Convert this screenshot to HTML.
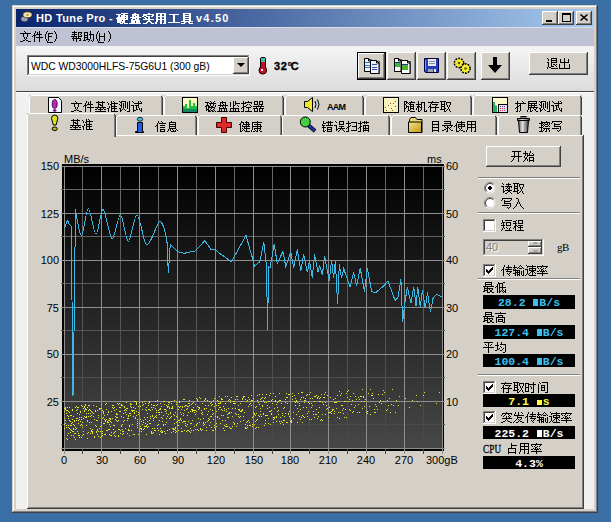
<!DOCTYPE html><html><head><meta charset="utf-8"><style>html,body{margin:0;padding:0}body{width:611px;height:522px;position:relative;overflow:hidden;background:#3A6EA5}div{box-sizing:border-box}</style></head><body>
<div style="position:absolute;left:12px;top:5px;width:586px;height:508px;background:#404040"></div>
<div style="position:absolute;left:12px;top:5px;width:585px;height:507px;background:#D4D0C8"></div>
<div style="position:absolute;left:13px;top:6px;width:584px;height:506px;background:#808080"></div>
<div style="position:absolute;left:13px;top:6px;width:583px;height:505px;background:#fff"></div>
<div style="position:absolute;left:14px;top:7px;width:582px;height:504px;background:#D4D0C8"></div>
<div style="position:absolute;left:16px;top:27px;width:578px;height:482px;background:#F0F0F0"></div>
<div style="position:absolute;left:16px;top:9px;width:578px;height:18px;background:linear-gradient(to right,#0A246A,#A6CAF0)"></div>
<div style="position:absolute;left:36px;top:13px;font-family:'Liberation Sans', sans-serif;font-size:11px;line-height:11px;color:#fff;font-weight:bold;white-space:nowrap;letter-spacing:0.35px">HD Tune Pro -</div>
<div style="position:absolute;left:196px;top:13px;font-family:'Liberation Sans', sans-serif;font-size:11px;line-height:11px;color:#fff;font-weight:bold;white-space:nowrap;letter-spacing:1.2px">v4.50</div>
<div style="position:absolute;left:542px;top:11px;width:16px;height:14px;background:#404040"></div><div style="position:absolute;left:542px;top:11px;width:15px;height:13px;background:#fff"></div><div style="position:absolute;left:543px;top:12px;width:14px;height:12px;background:#808080"></div><div style="position:absolute;left:543px;top:12px;width:13px;height:11px;background:#D4D0C8"></div>
<div style="position:absolute;left:558px;top:11px;width:16px;height:14px;background:#404040"></div><div style="position:absolute;left:558px;top:11px;width:15px;height:13px;background:#fff"></div><div style="position:absolute;left:559px;top:12px;width:14px;height:12px;background:#808080"></div><div style="position:absolute;left:559px;top:12px;width:13px;height:11px;background:#D4D0C8"></div>
<div style="position:absolute;left:576px;top:11px;width:16px;height:14px;background:#404040"></div><div style="position:absolute;left:576px;top:11px;width:15px;height:13px;background:#fff"></div><div style="position:absolute;left:577px;top:12px;width:14px;height:12px;background:#808080"></div><div style="position:absolute;left:577px;top:12px;width:13px;height:11px;background:#D4D0C8"></div>
<div style="position:absolute;left:546px;top:20px;width:6px;height:2px;background:#000"></div>
<div style="position:absolute;left:562px;top:13px;width:9px;height:9px;border:1px solid #000;border-top-width:2px"></div>
<div style="position:absolute;left:16px;top:27px;width:578px;height:19px;background:#BEC2D2"></div>
<div style="position:absolute;left:16px;top:27px;width:578px;height:1px;background:#D8DEEC"></div>
<div style="position:absolute;left:16px;top:46px;width:578px;height:45px;background:linear-gradient(to bottom,#F4F4F4,#DCDCDC)"></div>
<div style="position:absolute;left:16px;top:91px;width:578px;height:1px;background:#404040"></div>
<div style="position:absolute;left:16px;top:92px;width:578px;height:1px;background:#fff"></div>
<div style="position:absolute;left:27px;top:55px;width:223px;height:21px;background:#fff"></div><div style="position:absolute;left:27px;top:55px;width:222px;height:20px;background:#808080"></div><div style="position:absolute;left:28px;top:56px;width:221px;height:19px;background:#D4D0C8"></div><div style="position:absolute;left:28px;top:56px;width:220px;height:18px;background:#404040"></div><div style="position:absolute;left:29px;top:57px;width:219px;height:17px;background:#fff"></div>
<div style="position:absolute;left:31px;top:61px;font-family:'Liberation Sans', sans-serif;font-size:11px;line-height:11px;color:#000;font-weight:normal;white-space:nowrap;transform:scaleX(0.94);transform-origin:0 0">WDC WD3000HLFS-75G6U1 (300 gB)</div>
<div style="position:absolute;left:233px;top:57px;width:16px;height:17px;background:#404040"></div><div style="position:absolute;left:233px;top:57px;width:15px;height:16px;background:#fff"></div><div style="position:absolute;left:234px;top:58px;width:14px;height:15px;background:#808080"></div><div style="position:absolute;left:234px;top:58px;width:13px;height:14px;background:#D4D0C8"></div>
<div style="position:absolute;left:237px;top:63px;width:0;height:0;border-left:4px solid transparent;border-right:4px solid transparent;border-top:4px solid #000"></div>
<div style="position:absolute;left:274px;top:61px;font-family:'Liberation Sans', sans-serif;font-size:11px;line-height:11px;color:#000;font-weight:bold;white-space:nowrap;letter-spacing:0.6px;-webkit-text-stroke:0.3px #000">32<span style="letter-spacing:-1.2px">&#176;</span>C</div>
<div style="position:absolute;left:357px;top:52px;width:29px;height:28px;background:#000"></div><div style="position:absolute;left:358px;top:53px;width:27px;height:26px;background:#404040"></div><div style="position:absolute;left:358px;top:53px;width:26px;height:25px;background:#fff"></div><div style="position:absolute;left:359px;top:54px;width:25px;height:24px;background:#808080"></div><div style="position:absolute;left:359px;top:54px;width:24px;height:23px;background:#D4D0C8"></div>
<div style="position:absolute;left:387px;top:52px;width:29px;height:28px;background:#404040"></div><div style="position:absolute;left:387px;top:52px;width:28px;height:27px;background:#fff"></div><div style="position:absolute;left:388px;top:53px;width:27px;height:26px;background:#808080"></div><div style="position:absolute;left:388px;top:53px;width:26px;height:25px;background:#D4D0C8"></div>
<div style="position:absolute;left:417px;top:52px;width:29px;height:28px;background:#404040"></div><div style="position:absolute;left:417px;top:52px;width:28px;height:27px;background:#fff"></div><div style="position:absolute;left:418px;top:53px;width:27px;height:26px;background:#808080"></div><div style="position:absolute;left:418px;top:53px;width:26px;height:25px;background:#D4D0C8"></div>
<div style="position:absolute;left:447px;top:52px;width:29px;height:28px;background:#404040"></div><div style="position:absolute;left:447px;top:52px;width:28px;height:27px;background:#fff"></div><div style="position:absolute;left:448px;top:53px;width:27px;height:26px;background:#808080"></div><div style="position:absolute;left:448px;top:53px;width:26px;height:25px;background:#D4D0C8"></div>
<div style="position:absolute;left:481px;top:52px;width:29px;height:28px;background:#404040"></div><div style="position:absolute;left:481px;top:52px;width:28px;height:27px;background:#fff"></div><div style="position:absolute;left:482px;top:53px;width:27px;height:26px;background:#808080"></div><div style="position:absolute;left:482px;top:53px;width:26px;height:25px;background:#D4D0C8"></div>
<div style="position:absolute;left:529px;top:52px;width:59px;height:23px;background:#404040"></div><div style="position:absolute;left:529px;top:52px;width:58px;height:22px;background:#fff"></div><div style="position:absolute;left:530px;top:53px;width:57px;height:21px;background:#808080"></div><div style="position:absolute;left:530px;top:53px;width:56px;height:20px;background:#D4D0C8"></div>
<div style="position:absolute;left:29px;top:95px;width:134px;height:20px;background:#D4D0C8"></div><div style="position:absolute;left:29px;top:97px;width:1px;height:18px;background:#fff"></div><div style="position:absolute;left:30px;top:96px;width:1px;height:1px;background:#fff"></div><div style="position:absolute;left:31px;top:95px;width:130px;height:1px;background:#fff"></div><div style="position:absolute;left:161px;top:97px;width:1px;height:18px;background:#808080"></div><div style="position:absolute;left:162px;top:97px;width:1px;height:18px;background:#404040"></div><div style="position:absolute;left:161px;top:96px;width:1px;height:1px;background:#404040"></div>
<div style="position:absolute;left:164px;top:95px;width:120px;height:20px;background:#D4D0C8"></div><div style="position:absolute;left:164px;top:97px;width:1px;height:18px;background:#fff"></div><div style="position:absolute;left:165px;top:96px;width:1px;height:1px;background:#fff"></div><div style="position:absolute;left:166px;top:95px;width:116px;height:1px;background:#fff"></div><div style="position:absolute;left:282px;top:97px;width:1px;height:18px;background:#808080"></div><div style="position:absolute;left:283px;top:97px;width:1px;height:18px;background:#404040"></div><div style="position:absolute;left:282px;top:96px;width:1px;height:1px;background:#404040"></div>
<div style="position:absolute;left:285px;top:95px;width:79px;height:20px;background:#D4D0C8"></div><div style="position:absolute;left:285px;top:97px;width:1px;height:18px;background:#fff"></div><div style="position:absolute;left:286px;top:96px;width:1px;height:1px;background:#fff"></div><div style="position:absolute;left:287px;top:95px;width:75px;height:1px;background:#fff"></div><div style="position:absolute;left:362px;top:97px;width:1px;height:18px;background:#808080"></div><div style="position:absolute;left:363px;top:97px;width:1px;height:18px;background:#404040"></div><div style="position:absolute;left:362px;top:96px;width:1px;height:1px;background:#404040"></div>
<div style="position:absolute;left:365px;top:95px;width:107px;height:20px;background:#D4D0C8"></div><div style="position:absolute;left:365px;top:97px;width:1px;height:18px;background:#fff"></div><div style="position:absolute;left:366px;top:96px;width:1px;height:1px;background:#fff"></div><div style="position:absolute;left:367px;top:95px;width:103px;height:1px;background:#fff"></div><div style="position:absolute;left:470px;top:97px;width:1px;height:18px;background:#808080"></div><div style="position:absolute;left:471px;top:97px;width:1px;height:18px;background:#404040"></div><div style="position:absolute;left:470px;top:96px;width:1px;height:1px;background:#404040"></div>
<div style="position:absolute;left:473px;top:95px;width:109px;height:20px;background:#D4D0C8"></div><div style="position:absolute;left:473px;top:97px;width:1px;height:18px;background:#fff"></div><div style="position:absolute;left:474px;top:96px;width:1px;height:1px;background:#fff"></div><div style="position:absolute;left:475px;top:95px;width:105px;height:1px;background:#fff"></div><div style="position:absolute;left:580px;top:97px;width:1px;height:18px;background:#808080"></div><div style="position:absolute;left:581px;top:97px;width:1px;height:18px;background:#404040"></div><div style="position:absolute;left:580px;top:96px;width:1px;height:1px;background:#404040"></div>
<div style="position:absolute;left:27px;top:135px;width:557px;height:374px;background:#404040"></div>
<div style="position:absolute;left:27px;top:135px;width:556px;height:373px;background:#fff"></div>
<div style="position:absolute;left:28px;top:136px;width:555px;height:372px;background:#808080"></div>
<div style="position:absolute;left:28px;top:136px;width:554px;height:371px;background:#D4D0C8"></div>
<div style="position:absolute;left:116px;top:115px;width:81px;height:20px;background:#D4D0C8"></div><div style="position:absolute;left:116px;top:117px;width:1px;height:18px;background:#fff"></div><div style="position:absolute;left:117px;top:116px;width:1px;height:1px;background:#fff"></div><div style="position:absolute;left:118px;top:115px;width:77px;height:1px;background:#fff"></div><div style="position:absolute;left:195px;top:117px;width:1px;height:18px;background:#808080"></div><div style="position:absolute;left:196px;top:117px;width:1px;height:18px;background:#404040"></div><div style="position:absolute;left:195px;top:116px;width:1px;height:1px;background:#404040"></div>
<div style="position:absolute;left:198px;top:115px;width:84px;height:20px;background:#D4D0C8"></div><div style="position:absolute;left:198px;top:117px;width:1px;height:18px;background:#fff"></div><div style="position:absolute;left:199px;top:116px;width:1px;height:1px;background:#fff"></div><div style="position:absolute;left:200px;top:115px;width:80px;height:1px;background:#fff"></div><div style="position:absolute;left:280px;top:117px;width:1px;height:18px;background:#808080"></div><div style="position:absolute;left:281px;top:117px;width:1px;height:18px;background:#404040"></div><div style="position:absolute;left:280px;top:116px;width:1px;height:1px;background:#404040"></div>
<div style="position:absolute;left:282px;top:115px;width:108px;height:20px;background:#D4D0C8"></div><div style="position:absolute;left:282px;top:117px;width:1px;height:18px;background:#fff"></div><div style="position:absolute;left:283px;top:116px;width:1px;height:1px;background:#fff"></div><div style="position:absolute;left:284px;top:115px;width:104px;height:1px;background:#fff"></div><div style="position:absolute;left:388px;top:117px;width:1px;height:18px;background:#808080"></div><div style="position:absolute;left:389px;top:117px;width:1px;height:18px;background:#404040"></div><div style="position:absolute;left:388px;top:116px;width:1px;height:1px;background:#404040"></div>
<div style="position:absolute;left:391px;top:115px;width:106px;height:20px;background:#D4D0C8"></div><div style="position:absolute;left:391px;top:117px;width:1px;height:18px;background:#fff"></div><div style="position:absolute;left:392px;top:116px;width:1px;height:1px;background:#fff"></div><div style="position:absolute;left:393px;top:115px;width:102px;height:1px;background:#fff"></div><div style="position:absolute;left:495px;top:117px;width:1px;height:18px;background:#808080"></div><div style="position:absolute;left:496px;top:117px;width:1px;height:18px;background:#404040"></div><div style="position:absolute;left:495px;top:116px;width:1px;height:1px;background:#404040"></div>
<div style="position:absolute;left:498px;top:115px;width:84px;height:20px;background:#D4D0C8"></div><div style="position:absolute;left:498px;top:117px;width:1px;height:18px;background:#fff"></div><div style="position:absolute;left:499px;top:116px;width:1px;height:1px;background:#fff"></div><div style="position:absolute;left:500px;top:115px;width:80px;height:1px;background:#fff"></div><div style="position:absolute;left:580px;top:117px;width:1px;height:18px;background:#808080"></div><div style="position:absolute;left:581px;top:117px;width:1px;height:18px;background:#404040"></div><div style="position:absolute;left:580px;top:116px;width:1px;height:1px;background:#404040"></div>
<div style="position:absolute;left:27px;top:113px;width:89px;height:24px;background:#D4D0C8"></div><div style="position:absolute;left:27px;top:115px;width:1px;height:22px;background:#fff"></div><div style="position:absolute;left:28px;top:114px;width:1px;height:1px;background:#fff"></div><div style="position:absolute;left:29px;top:113px;width:85px;height:1px;background:#fff"></div><div style="position:absolute;left:114px;top:115px;width:1px;height:22px;background:#808080"></div><div style="position:absolute;left:115px;top:115px;width:1px;height:22px;background:#404040"></div><div style="position:absolute;left:114px;top:114px;width:1px;height:1px;background:#404040"></div>
<div style="position:absolute;left:28px;top:135px;width:86px;height:2px;background:#D4D0C8"></div>
<div style="position:absolute;left:62px;top:164px;width:382px;height:287px;background:#000"></div>
<div style="position:absolute;left:64px;top:166px;width:379px;height:283px;background:linear-gradient(to bottom,#000000,#474747)"></div>
<div style="position:absolute;left:0px;top:161px;font-family:'Liberation Sans', sans-serif;font-size:11px;line-height:11px;color:#000;font-weight:normal;white-space:nowrap;width:59px;text-align:right">150</div>
<div style="position:absolute;left:446px;top:161px;font-family:'Liberation Sans', sans-serif;font-size:11px;line-height:11px;color:#000;font-weight:normal;white-space:nowrap;">60</div>
<div style="position:absolute;left:0px;top:209px;font-family:'Liberation Sans', sans-serif;font-size:11px;line-height:11px;color:#000;font-weight:normal;white-space:nowrap;width:59px;text-align:right">125</div>
<div style="position:absolute;left:446px;top:209px;font-family:'Liberation Sans', sans-serif;font-size:11px;line-height:11px;color:#000;font-weight:normal;white-space:nowrap;">50</div>
<div style="position:absolute;left:0px;top:255px;font-family:'Liberation Sans', sans-serif;font-size:11px;line-height:11px;color:#000;font-weight:normal;white-space:nowrap;width:59px;text-align:right">100</div>
<div style="position:absolute;left:446px;top:255px;font-family:'Liberation Sans', sans-serif;font-size:11px;line-height:11px;color:#000;font-weight:normal;white-space:nowrap;">40</div>
<div style="position:absolute;left:0px;top:303px;font-family:'Liberation Sans', sans-serif;font-size:11px;line-height:11px;color:#000;font-weight:normal;white-space:nowrap;width:59px;text-align:right">75</div>
<div style="position:absolute;left:446px;top:303px;font-family:'Liberation Sans', sans-serif;font-size:11px;line-height:11px;color:#000;font-weight:normal;white-space:nowrap;">30</div>
<div style="position:absolute;left:0px;top:349px;font-family:'Liberation Sans', sans-serif;font-size:11px;line-height:11px;color:#000;font-weight:normal;white-space:nowrap;width:59px;text-align:right">50</div>
<div style="position:absolute;left:446px;top:349px;font-family:'Liberation Sans', sans-serif;font-size:11px;line-height:11px;color:#000;font-weight:normal;white-space:nowrap;">20</div>
<div style="position:absolute;left:0px;top:397px;font-family:'Liberation Sans', sans-serif;font-size:11px;line-height:11px;color:#000;font-weight:normal;white-space:nowrap;width:59px;text-align:right">25</div>
<div style="position:absolute;left:446px;top:397px;font-family:'Liberation Sans', sans-serif;font-size:11px;line-height:11px;color:#000;font-weight:normal;white-space:nowrap;">10</div>
<div style="position:absolute;left:34px;top:455px;font-family:'Liberation Sans', sans-serif;font-size:11px;line-height:11px;color:#000;font-weight:normal;white-space:nowrap;width:60px;text-align:center">0</div>
<div style="position:absolute;left:72px;top:455px;font-family:'Liberation Sans', sans-serif;font-size:11px;line-height:11px;color:#000;font-weight:normal;white-space:nowrap;width:60px;text-align:center">30</div>
<div style="position:absolute;left:110px;top:455px;font-family:'Liberation Sans', sans-serif;font-size:11px;line-height:11px;color:#000;font-weight:normal;white-space:nowrap;width:60px;text-align:center">60</div>
<div style="position:absolute;left:148px;top:455px;font-family:'Liberation Sans', sans-serif;font-size:11px;line-height:11px;color:#000;font-weight:normal;white-space:nowrap;width:60px;text-align:center">90</div>
<div style="position:absolute;left:186px;top:455px;font-family:'Liberation Sans', sans-serif;font-size:11px;line-height:11px;color:#000;font-weight:normal;white-space:nowrap;width:60px;text-align:center">120</div>
<div style="position:absolute;left:224px;top:455px;font-family:'Liberation Sans', sans-serif;font-size:11px;line-height:11px;color:#000;font-weight:normal;white-space:nowrap;width:60px;text-align:center">150</div>
<div style="position:absolute;left:260px;top:455px;font-family:'Liberation Sans', sans-serif;font-size:11px;line-height:11px;color:#000;font-weight:normal;white-space:nowrap;width:60px;text-align:center">180</div>
<div style="position:absolute;left:298px;top:455px;font-family:'Liberation Sans', sans-serif;font-size:11px;line-height:11px;color:#000;font-weight:normal;white-space:nowrap;width:60px;text-align:center">210</div>
<div style="position:absolute;left:336px;top:455px;font-family:'Liberation Sans', sans-serif;font-size:11px;line-height:11px;color:#000;font-weight:normal;white-space:nowrap;width:60px;text-align:center">240</div>
<div style="position:absolute;left:374px;top:455px;font-family:'Liberation Sans', sans-serif;font-size:11px;line-height:11px;color:#000;font-weight:normal;white-space:nowrap;width:60px;text-align:center">270</div>
<div style="position:absolute;left:426px;top:455px;font-family:'Liberation Sans', sans-serif;font-size:11px;line-height:11px;color:#000;font-weight:normal;white-space:nowrap;">300gB</div>
<div style="position:absolute;left:64px;top:154px;font-family:'Liberation Sans', sans-serif;font-size:11px;line-height:11px;color:#000;font-weight:normal;white-space:nowrap;">MB/s</div>
<div style="position:absolute;left:427px;top:154px;font-family:'Liberation Sans', sans-serif;font-size:11px;line-height:11px;color:#000;font-weight:normal;white-space:nowrap;">ms</div>
<div style="position:absolute;left:486px;top:146px;width:75px;height:21px;background:#404040"></div><div style="position:absolute;left:486px;top:146px;width:74px;height:20px;background:#fff"></div><div style="position:absolute;left:487px;top:147px;width:73px;height:19px;background:#808080"></div><div style="position:absolute;left:487px;top:147px;width:72px;height:18px;background:#D4D0C8"></div>
<div style="position:absolute;left:478px;top:177px;width:102px;height:1px;background:#808080"></div><div style="position:absolute;left:478px;top:178px;width:102px;height:1px;background:#fff"></div>
<div style="position:absolute;left:478px;top:212px;width:102px;height:1px;background:#808080"></div><div style="position:absolute;left:478px;top:213px;width:102px;height:1px;background:#fff"></div>
<div style="position:absolute;left:478px;top:278px;width:102px;height:1px;background:#808080"></div><div style="position:absolute;left:478px;top:279px;width:102px;height:1px;background:#fff"></div>
<div style="position:absolute;left:478px;top:374px;width:102px;height:1px;background:#808080"></div><div style="position:absolute;left:478px;top:375px;width:102px;height:1px;background:#fff"></div>
<div style="position:absolute;left:483px;top:219px;width:13px;height:13px;background:#fff"></div><div style="position:absolute;left:483px;top:219px;width:12px;height:12px;background:#808080"></div><div style="position:absolute;left:484px;top:220px;width:11px;height:11px;background:#D4D0C8"></div><div style="position:absolute;left:484px;top:220px;width:10px;height:10px;background:#404040"></div><div style="position:absolute;left:485px;top:221px;width:9px;height:9px;background:#fff"></div>
<div style="position:absolute;left:483px;top:264px;width:13px;height:13px;background:#fff"></div><div style="position:absolute;left:483px;top:264px;width:12px;height:12px;background:#808080"></div><div style="position:absolute;left:484px;top:265px;width:11px;height:11px;background:#D4D0C8"></div><div style="position:absolute;left:484px;top:265px;width:10px;height:10px;background:#404040"></div><div style="position:absolute;left:485px;top:266px;width:9px;height:9px;background:#fff"></div>
<div style="position:absolute;left:483px;top:381px;width:13px;height:13px;background:#fff"></div><div style="position:absolute;left:483px;top:381px;width:12px;height:12px;background:#808080"></div><div style="position:absolute;left:484px;top:382px;width:11px;height:11px;background:#D4D0C8"></div><div style="position:absolute;left:484px;top:382px;width:10px;height:10px;background:#404040"></div><div style="position:absolute;left:485px;top:383px;width:9px;height:9px;background:#fff"></div>
<div style="position:absolute;left:483px;top:411px;width:13px;height:13px;background:#fff"></div><div style="position:absolute;left:483px;top:411px;width:12px;height:12px;background:#808080"></div><div style="position:absolute;left:484px;top:412px;width:11px;height:11px;background:#D4D0C8"></div><div style="position:absolute;left:484px;top:412px;width:10px;height:10px;background:#404040"></div><div style="position:absolute;left:485px;top:413px;width:9px;height:9px;background:#fff"></div>
<div style="position:absolute;left:483px;top:239px;width:61px;height:17px;background:#fff"></div><div style="position:absolute;left:483px;top:239px;width:60px;height:16px;background:#808080"></div><div style="position:absolute;left:484px;top:240px;width:59px;height:15px;background:#D4D0C8"></div><div style="position:absolute;left:484px;top:240px;width:58px;height:14px;background:#404040"></div><div style="position:absolute;left:485px;top:241px;width:57px;height:13px;background:#D4D0C8"></div>
<div style="position:absolute;left:487px;top:243px;font-family:'Liberation Sans', sans-serif;font-size:11px;line-height:11px;color:#fff;font-weight:normal;white-space:nowrap;">40</div>
<div style="position:absolute;left:486px;top:242px;font-family:'Liberation Sans', sans-serif;font-size:11px;line-height:11px;color:#808080;font-weight:normal;white-space:nowrap;">40</div>
<div style="position:absolute;left:528px;top:241px;width:14px;height:6px;background:#404040"></div><div style="position:absolute;left:528px;top:241px;width:13px;height:5px;background:#fff"></div><div style="position:absolute;left:529px;top:242px;width:12px;height:4px;background:#808080"></div><div style="position:absolute;left:529px;top:242px;width:11px;height:3px;background:#D4D0C8"></div>
<div style="position:absolute;left:528px;top:247px;width:14px;height:7px;background:#404040"></div><div style="position:absolute;left:528px;top:247px;width:13px;height:6px;background:#fff"></div><div style="position:absolute;left:529px;top:248px;width:12px;height:5px;background:#808080"></div><div style="position:absolute;left:529px;top:248px;width:11px;height:4px;background:#D4D0C8"></div>
<div style="position:absolute;left:533px;top:243px;width:5px;height:1px;background:#A0A0A0"></div>
<div style="position:absolute;left:534px;top:242px;width:3px;height:1px;background:#A0A0A0"></div>
<div style="position:absolute;left:533px;top:250px;width:5px;height:1px;background:#A0A0A0"></div>
<div style="position:absolute;left:534px;top:251px;width:3px;height:1px;background:#A0A0A0"></div>
<div style="position:absolute;left:557px;top:242px;font-family:'Liberation Serif', serif;font-size:11px;line-height:11px;color:#000;font-weight:normal;white-space:nowrap;letter-spacing:-0.6px">gB</div>
<div style="position:absolute;left:483px;top:295px;width:92px;height:14px;background:#000"></div><div style="position:absolute;left:483px;top:297px;font-family:'Liberation Mono', monospace;font-size:11.5px;line-height:11.5px;color:#3CC0F0;font-weight:bold;white-space:nowrap;width:92px;text-align:center">28.2 <span style="display:inline-block;width:6.9px;height:7px;position:relative"><span style="position:absolute;left:1px;bottom:0;width:5px;height:7px;background:currentColor"></span></span>B/s</div>
<div style="position:absolute;left:483px;top:325px;width:92px;height:14px;background:#000"></div><div style="position:absolute;left:483px;top:327px;font-family:'Liberation Mono', monospace;font-size:11.5px;line-height:11.5px;color:#3CC0F0;font-weight:bold;white-space:nowrap;width:92px;text-align:center">127.4 <span style="display:inline-block;width:6.9px;height:7px;position:relative"><span style="position:absolute;left:1px;bottom:0;width:5px;height:7px;background:currentColor"></span></span>B/s</div>
<div style="position:absolute;left:483px;top:354px;width:92px;height:13px;background:#000"></div><div style="position:absolute;left:483px;top:356px;font-family:'Liberation Mono', monospace;font-size:11.5px;line-height:11.5px;color:#3CC0F0;font-weight:bold;white-space:nowrap;width:92px;text-align:center">100.4 <span style="display:inline-block;width:6.9px;height:7px;position:relative"><span style="position:absolute;left:1px;bottom:0;width:5px;height:7px;background:currentColor"></span></span>B/s</div>
<div style="position:absolute;left:483px;top:394px;width:92px;height:13px;background:#000"></div><div style="position:absolute;left:483px;top:396px;font-family:'Liberation Mono', monospace;font-size:11.5px;line-height:11.5px;color:#FFFF40;font-weight:bold;white-space:nowrap;width:92px;text-align:center">7.1 <span style="display:inline-block;width:6.9px;height:5px;position:relative"><span style="position:absolute;left:1px;bottom:0;width:5px;height:5px;background:currentColor"></span></span>s</div>
<div style="position:absolute;left:483px;top:426px;width:92px;height:13px;background:#000"></div><div style="position:absolute;left:483px;top:428px;font-family:'Liberation Mono', monospace;font-size:11.5px;line-height:11.5px;color:#FFFFFF;font-weight:bold;white-space:nowrap;width:92px;text-align:center">225.2 <span style="display:inline-block;width:6.9px;height:7px;position:relative"><span style="position:absolute;left:1px;bottom:0;width:5px;height:7px;background:currentColor"></span></span>B/s</div>
<div style="position:absolute;left:483px;top:456px;width:92px;height:13px;background:#000"></div><div style="position:absolute;left:483px;top:458px;font-family:'Liberation Mono', monospace;font-size:11.5px;line-height:11.5px;color:#FFFFFF;font-weight:bold;white-space:nowrap;width:92px;text-align:center">4.3%</div>
<div style="position:absolute;left:483px;top:443px;font-family:'Liberation Serif', serif;font-size:12px;line-height:12px;color:#000;font-weight:normal;white-space:nowrap;transform:scaleX(0.76);transform-origin:0 0;letter-spacing:0.3px;-webkit-text-stroke:0.3px #000">CPU</div>
<div style="position:absolute;left:327px;top:103px;font-family:'Liberation Sans', sans-serif;font-size:9px;line-height:9px;color:#000;font-weight:bold;white-space:nowrap;letter-spacing:-0.7px;transform:scaleY(1.1)">AAM</div>
<svg style="position:absolute;left:0;top:0" width="611" height="522" viewBox="0 0 611 522"><defs><linearGradient id="mg" gradientUnits="userSpaceOnUse" x1="0" y1="166" x2="0" y2="449"><stop offset="0" stop-color="#6A6A6A"/><stop offset="1" stop-color="#464646"/></linearGradient></defs><path d="M82.5 166V454M120.5 166V454M158.5 166V454M196.5 166V454M234.5 166V454M272.5 166V454M309.5 166V454M347.5 166V454M385.5 166V454M423.5 166V454M61 189.5H445M61 236.5H445M61 283.5H445M61 330.5H445M61 377.5H445M61 424.5H445" stroke="url(#mg)" stroke-width="1" fill="none"/><path d="M64.5 166V454M101.5 166V454M139.5 166V454M177.5 166V454M215.5 166V454M253.5 166V454M290.5 166V454M328.5 166V454M366.5 166V454M404.5 166V454M442.5 166V454M61 166.5H445M61 213.5H445M61 260.5H445M61 307.5H445M61 354.5H445M61 401.5H445M61 448.5H445" stroke="#8E8E8E" stroke-width="1" fill="none"/><path fill="#E8E820" d="M174 423h1v1h-1zM185 423h1v1h-1zM251 405h1v1h-1zM262 405h1v1h-1zM311 419h1v1h-1zM365 399h1v1h-1zM158 424h1v1h-1zM197 406h1v1h-1zM284 420h1v1h-1zM398 405h1v1h-1zM201 413h1v1h-1zM307 394h1v1h-1zM178 420h1v1h-1zM265 397h1v1h-1zM159 434h1v1h-1zM273 419h1v1h-1zM265 415h1v1h-1zM109 424h1v1h-1zM171 408h1v1h-1zM360 396h1v1h-1zM254 424h1v1h-1zM120 433h1v1h-1zM285 402h1v1h-1zM65 408h1v1h-1zM277 407h1v1h-1zM70 432h1v1h-1zM121 416h1v1h-1zM90 410h1v1h-1zM121 425h1v1h-1zM79 419h1v1h-1zM353 393h1v1h-1zM71 415h1v1h-1zM174 400h1v1h-1zM90 428h1v1h-1zM208 411h1v1h-1zM79 437h1v1h-1zM166 405h1v1h-1zM353 411h1v1h-1zM208 420h1v1h-1zM91 411h1v1h-1zM177 414h1v1h-1zM251 400h1v1h-1zM314 401h1v1h-1zM158 410h1v1h-1zM367 413h1v1h-1zM220 403h1v1h-1zM323 397h1v1h-1zM387 400h1v1h-1zM167 406h1v1h-1zM178 406h1v1h-1zM242 409h1v1h-1zM387 409h1v1h-1zM304 402h1v1h-1zM288 394h1v1h-1zM159 420h1v1h-1zM234 423h1v1h-1zM64 411h1v1h-1zM117 414h1v1h-1zM147 427h1v1h-1zM307 416h1v1h-1zM337 417h1v1h-1zM139 423h1v1h-1zM86 417h1v1h-1zM171 403h1v1h-1zM212 404h1v1h-1zM372 393h1v1h-1zM204 400h1v1h-1zM89 422h1v1h-1zM140 406h1v1h-1zM204 409h1v1h-1zM349 409h1v1h-1zM266 402h1v1h-1zM277 402h1v1h-1zM132 411h1v1h-1zM341 405h1v1h-1zM392 389h1v1h-1zM162 421h1v1h-1zM269 407h1v1h-1zM79 414h1v1h-1zM154 417h1v1h-1zM250 403h1v1h-1zM361 401h1v1h-1zM113 425h1v1h-1zM291 422h1v1h-1zM364 406h1v1h-1zM238 416h1v1h-1zM334 402h1v1h-1zM292 396h1v1h-1zM314 396h1v1h-1zM249 425h1v1h-1zM334 411h1v1h-1zM104 434h1v1h-1zM166 418h1v1h-1zM375 412h1v1h-1zM75 407h1v1h-1zM186 405h1v1h-1zM116 417h1v1h-1zM108 422h1v1h-1zM136 404h1v1h-1zM147 413h1v1h-1zM211 416h1v1h-1zM66 425h1v1h-1zM399 396h1v1h-1zM128 418h1v1h-1zM246 401h1v1h-1zM231 412h1v1h-1zM254 414h1v1h-1zM148 405h1v1h-1zM298 411h1v1h-1zM97 430h1v1h-1zM352 400h1v1h-1zM67 435h1v1h-1zM78 435h1v1h-1zM181 420h1v1h-1zM134 434h1v1h-1zM299 403h1v1h-1zM227 396h1v1h-1zM322 414h1v1h-1zM216 405h1v1h-1zM154 430h1v1h-1zM227 414h1v1h-1zM71 423h1v1h-1zM146 426h1v1h-1zM260 411h1v1h-1zM280 417h1v1h-1zM364 401h1v1h-1zM123 433h1v1h-1zM378 394h1v1h-1zM166 413h1v1h-1zM124 407h1v1h-1zM143 420h1v1h-1zM166 422h1v1h-1zM359 399h1v1h-1zM197 400h1v1h-1zM295 405h1v1h-1zM143 429h1v1h-1zM242 399h1v1h-1zM105 421h1v1h-1zM189 405h1v1h-1zM211 402h1v1h-1zM302 422h1v1h-1zM420 405h1v1h-1zM74 433h1v1h-1zM147 417h1v1h-1zM222 420h1v1h-1zM200 429h1v1h-1zM66 438h1v1h-1zM203 425h1v1h-1zM318 412h1v1h-1zM86 416h1v1h-1zM109 418h1v1h-1zM184 421h1v1h-1zM329 412h1v1h-1zM340 412h1v1h-1zM86 425h1v1h-1zM172 428h1v1h-1zM184 430h1v1h-1zM349 399h1v1h-1zM142 424h1v1h-1zM97 434h1v1h-1zM204 408h1v1h-1zM405 398h1v1h-1zM310 398h1v1h-1zM101 404h1v1h-1zM245 427h1v1h-1zM256 427h1v1h-1zM237 423h1v1h-1zM90 413h1v1h-1zM92 432h1v1h-1zM268 401h1v1h-1zM173 429h1v1h-1zM299 416h1v1h-1zM272 399h1v1h-1zM193 407h1v1h-1zM333 409h1v1h-1zM358 404h1v1h-1zM208 405h1v1h-1zM436 403h1v1h-1zM104 415h1v1h-1zM230 402h1v1h-1zM257 419h1v1h-1zM176 431h1v1h-1zM291 421h1v1h-1zM155 408h1v1h-1zM218 409h1v1h-1zM241 411h1v1h-1zM177 417h1v1h-1zM261 398h1v1h-1zM93 405h1v1h-1zM124 420h1v1h-1zM359 412h1v1h-1zM180 419h1v1h-1zM108 412h1v1h-1zM261 416h1v1h-1zM253 412h1v1h-1zM136 403h1v1h-1zM371 395h1v1h-1zM160 431h1v1h-1zM192 411h1v1h-1zM74 437h1v1h-1zM169 418h1v1h-1zM192 420h1v1h-1zM329 407h1v1h-1zM78 407h1v1h-1zM67 407h1v1h-1zM97 420h1v1h-1zM150 423h1v1h-1zM225 426h1v1h-1zM318 416h1v1h-1zM215 403h1v1h-1zM161 432h1v1h-1zM256 413h1v1h-1zM70 421h1v1h-1zM111 422h1v1h-1zM226 409h1v1h-1zM363 396h1v1h-1zM100 431h1v1h-1zM101 408h1v1h-1zM165 411h1v1h-1zM112 405h1v1h-1zM146 407h1v1h-1zM193 402h1v1h-1zM214 425h1v1h-1zM272 403h1v1h-1zM206 430h1v1h-1zM146 425h1v1h-1zM81 417h1v1h-1zM104 419h1v1h-1zM115 419h1v1h-1zM268 423h1v1h-1zM124 406h1v1h-1zM210 409h1v1h-1zM367 411h1v1h-1zM73 431h1v1h-1zM219 396h1v1h-1zM242 398h1v1h-1zM85 405h1v1h-1zM253 398h1v1h-1zM105 420h1v1h-1zM116 420h1v1h-1zM127 420h1v1h-1zM191 423h1v1h-1zM222 401h1v1h-1zM234 403h1v1h-1zM66 410h1v1h-1zM283 408h1v1h-1zM325 414h1v1h-1zM222 410h1v1h-1zM412 400h1v1h-1zM200 419h1v1h-1zM286 422h1v1h-1zM118 429h1v1h-1zM231 397h1v1h-1zM381 403h1v1h-1zM393 405h1v1h-1zM142 405h1v1h-1zM153 405h1v1h-1zM150 418h1v1h-1zM134 401h1v1h-1zM362 408h1v1h-1zM424 392h1v1h-1zM245 399h1v1h-1zM100 408h1v1h-1zM134 410h1v1h-1zM343 413h1v1h-1zM153 432h1v1h-1zM320 420h1v1h-1zM100 426h1v1h-1zM131 404h1v1h-1zM111 435h1v1h-1zM321 394h1v1h-1zM355 396h1v1h-1zM92 431h1v1h-1zM257 400h1v1h-1zM355 405h1v1h-1zM374 409h1v1h-1zM229 427h1v1h-1zM112 418h1v1h-1zM238 405h1v1h-1zM241 401h1v1h-1zM187 430h1v1h-1zM198 430h1v1h-1zM104 423h1v1h-1zM238 414h1v1h-1zM241 410h1v1h-1zM135 401h1v1h-1zM260 414h1v1h-1zM191 409h1v1h-1zM73 435h1v1h-1zM199 422h1v1h-1zM210 422h1v1h-1zM93 413h1v1h-1zM180 418h1v1h-1zM255 421h1v1h-1zM85 409h1v1h-1zM108 411h1v1h-1zM138 412h1v1h-1zM157 425h1v1h-1zM211 405h1v1h-1zM423 395h1v1h-1zM370 389h1v1h-1zM169 408h1v1h-1zM192 410h1v1h-1zM306 395h1v1h-1zM184 406h1v1h-1zM252 424h1v1h-1zM386 410h1v1h-1zM264 398h1v1h-1zM119 407h1v1h-1zM142 409h1v1h-1zM153 418h1v1h-1zM343 408h1v1h-1zM237 399h1v1h-1zM214 406h1v1h-1zM310 392h1v1h-1zM141 431h1v1h-1zM229 413h1v1h-1zM257 395h1v1h-1zM226 426h1v1h-1zM198 407h1v1h-1zM324 394h1v1h-1zM123 413h1v1h-1zM176 416h1v1h-1zM195 429h1v1h-1zM145 419h1v1h-1zM218 403h1v1h-1zM282 415h1v1h-1zM199 408h1v1h-1zM389 398h1v1h-1zM168 402h1v1h-1zM191 404h1v1h-1zM255 407h1v1h-1zM85 404h1v1h-1zM130 403h1v1h-1zM126 414h1v1h-1zM213 419h1v1h-1zM267 408h1v1h-1zM138 434h1v1h-1zM362 389h1v1h-1zM182 431h1v1h-1zM172 408h1v1h-1zM161 417h1v1h-1zM225 420h1v1h-1zM264 402h1v1h-1zM68 427h1v1h-1zM119 411h1v1h-1zM217 416h1v1h-1zM279 400h1v1h-1zM320 401h1v1h-1zM301 397h1v1h-1zM382 394h1v1h-1zM119 429h1v1h-1zM92 412h1v1h-1zM229 399h1v1h-1zM309 419h1v1h-1zM175 428h1v1h-1zM176 402h1v1h-1zM69 428h1v1h-1zM164 409h1v1h-1zM156 405h1v1h-1zM179 407h1v1h-1zM145 423h1v1h-1zM271 410h1v1h-1zM73 416h1v1h-1zM103 417h1v1h-1zM137 419h1v1h-1zM188 403h1v1h-1zM210 403h1v1h-1zM168 406h1v1h-1zM221 409h1v1h-1zM114 435h1v1h-1zM149 402h1v1h-1zM377 409h1v1h-1zM149 420h1v1h-1zM327 408h1v1h-1zM107 414h1v1h-1zM233 401h1v1h-1zM350 410h1v1h-1zM88 410h1v1h-1zM96 432h1v1h-1zM300 409h1v1h-1zM297 422h1v1h-1zM99 428h1v1h-1zM339 391h1v1h-1zM301 392h1v1h-1zM247 421h1v1h-1zM77 409h1v1h-1zM111 411h1v1h-1zM134 413h1v1h-1zM339 418h1v1h-1zM77 418h1v1h-1zM141 421h1v1h-1zM144 417h1v1h-1zM259 404h1v1h-1zM175 432h1v1h-1zM144 426h1v1h-1zM195 410h1v1h-1zM229 412h1v1h-1zM164 404h1v1h-1zM187 406h1v1h-1zM373 398h1v1h-1zM179 402h1v1h-1zM396 400h1v1h-1zM187 415h1v1h-1zM388 405h1v1h-1zM145 409h1v1h-1zM305 398h1v1h-1zM187 424h1v1h-1zM83 434h1v1h-1zM179 420h1v1h-1zM164 431h1v1h-1zM103 412h1v1h-1zM290 418h1v1h-1zM271 414h1v1h-1zM346 417h1v1h-1zM75 439h1v1h-1zM137 423h1v1h-1zM122 434h1v1h-1zM302 392h1v1h-1zM347 391h1v1h-1zM213 400h1v1h-1zM255 415h1v1h-1zM335 398h1v1h-1zM138 406h1v1h-1zM286 393h1v1h-1zM350 396h1v1h-1zM205 405h1v1h-1zM252 400h1v1h-1zM244 396h1v1h-1zM88 405h1v1h-1zM297 408h1v1h-1zM277 411h1v1h-1zM88 432h1v1h-1zM151 433h1v1h-1zM183 413h1v1h-1zM289 394h1v1h-1zM98 436h1v1h-1zM247 425h1v1h-1zM77 413h1v1h-1zM152 416h1v1h-1zM312 405h1v1h-1zM395 412h1v1h-1zM175 427h1v1h-1zM251 395h1v1h-1zM110 419h1v1h-1zM91 415h1v1h-1zM324 397h1v1h-1zM220 407h1v1h-1zM102 433h1v1h-1zM354 407h1v1h-1zM271 400h1v1h-1zM114 407h1v1h-1zM106 403h1v1h-1zM197 423h1v1h-1zM209 425h1v1h-1zM240 403h1v1h-1zM122 429h1v1h-1zM72 410h1v1h-1zM221 399h1v1h-1zM114 425h1v1h-1zM137 427h1v1h-1zM201 430h1v1h-1zM72 419h1v1h-1zM232 408h1v1h-1zM263 414h1v1h-1zM149 401h1v1h-1zM240 421h1v1h-1zM106 430h1v1h-1zM335 402h1v1h-1zM64 424h1v1h-1zM126 408h1v1h-1zM190 411h1v1h-1zM118 404h1v1h-1zM130 406h1v1h-1zM182 407h1v1h-1zM213 413h1v1h-1zM232 426h1v1h-1zM265 423h1v1h-1zM171 416h1v1h-1zM65 407h1v1h-1zM99 409h1v1h-1zM225 396h1v1h-1zM236 396h1v1h-1zM246 428h1v1h-1zM300 399h1v1h-1zM140 419h1v1h-1zM202 403h1v1h-1zM183 399h1v1h-1zM258 402h1v1h-1zM140 428h1v1h-1zM202 412h1v1h-1zM266 415h1v1h-1zM132 424h1v1h-1zM269 411h1v1h-1zM361 396h1v1h-1zM98 431h1v1h-1zM113 429h1v1h-1zM133 407h1v1h-1zM259 394h1v1h-1zM101 436h1v1h-1zM216 423h1v1h-1zM250 425h1v1h-1zM133 416h1v1h-1zM281 403h1v1h-1zM141 429h1v1h-1zM102 410h1v1h-1zM125 412h1v1h-1zM193 430h1v1h-1zM289 416h1v1h-1zM342 410h1v1h-1zM133 434h1v1h-1zM179 401h1v1h-1zM220 402h1v1h-1zM281 421h1v1h-1zM186 409h1v1h-1zM156 417h1v1h-1zM75 429h1v1h-1zM103 411h1v1h-1zM122 424h1v1h-1zM84 407h1v1h-1zM263 400h1v1h-1zM338 412h1v1h-1zM84 416h1v1h-1zM95 425h1v1h-1zM87 421h1v1h-1zM224 408h1v1h-1zM273 422h1v1h-1zM64 428h1v1h-1zM139 431h1v1h-1zM148 409h1v1h-1zM319 398h1v1h-1zM383 401h1v1h-1zM205 422h1v1h-1zM319 407h1v1h-1zM132 410h1v1h-1zM65 420h1v1h-1zM67 439h1v1h-1zM76 420h1v1h-1zM68 416h1v1h-1zM98 417h1v1h-1zM163 425h1v1h-1zM151 432h1v1h-1zM212 430h1v1h-1zM68 425h1v1h-1zM194 412h1v1h-1zM235 413h1v1h-1zM258 415h1v1h-1zM101 422h1v1h-1zM113 433h1v1h-1zM152 415h1v1h-1zM342 405h1v1h-1zM82 427h1v1h-1zM345 401h1v1h-1zM289 411h1v1h-1zM262 394h1v1h-1zM110 418h1v1h-1zM185 421h1v1h-1zM239 410h1v1h-1zM94 419h1v1h-1zM145 403h1v1h-1zM346 393h1v1h-1zM189 400h1v1h-1zM178 409h1v1h-1zM94 437h1v1h-1zM315 396h1v1h-1zM75 433h1v1h-1zM105 434h1v1h-1zM72 409h1v1h-1zM84 411h1v1h-1zM95 411h1v1h-1zM87 407h1v1h-1zM159 414h1v1h-1zM186 431h1v1h-1zM147 421h1v1h-1zM221 398h1v1h-1zM296 401h1v1h-1zM117 417h1v1h-1zM315 414h1v1h-1zM205 399h1v1h-1zM273 417h1v1h-1zM254 413h1v1h-1zM380 400h1v1h-1zM182 406h1v1h-1zM97 429h1v1h-1zM297 402h1v1h-1zM76 406h1v1h-1zM308 402h1v1h-1zM121 405h1v1h-1zM68 411h1v1h-1zM235 399h1v1h-1zM269 401h1v1h-1zM181 428h1v1h-1zM235 408h1v1h-1zM79 417h1v1h-1zM82 422h1v1h-1zM270 393h1v1h-1zM79 435h1v1h-1zM146 434h1v1h-1zM208 418h1v1h-1zM311 403h1v1h-1zM292 399h1v1h-1zM185 425h1v1h-1zM102 418h1v1h-1zM177 421h1v1h-1zM197 399h1v1h-1zM209 401h1v1h-1zM155 430h1v1h-1zM314 417h1v1h-1zM122 405h1v1h-1zM323 404h1v1h-1zM114 410h1v1h-1zM253 416h1v1h-1zM84 406h1v1h-1zM159 409h1v1h-1zM186 426h1v1h-1zM304 400h1v1h-1zM117 403h1v1h-1zM390 412h1v1h-1zM189 431h1v1h-1zM72 422h1v1h-1zM200 428h1v1h-1zM64 418h1v1h-1zM117 421h1v1h-1zM296 414h1v1h-1zM171 401h1v1h-1zM128 430h1v1h-1zM391 404h1v1h-1zM78 420h1v1h-1zM151 404h1v1h-1zM246 422h1v1h-1zM129 413h1v1h-1zM163 415h1v1h-1zM181 414h1v1h-1zM70 425h1v1h-1zM215 416h1v1h-1zM333 399h1v1h-1zM113 405h1v1h-1zM330 412h1v1h-1zM352 412h1v1h-1zM235 403h1v1h-1zM384 392h1v1h-1zM250 401h1v1h-1zM173 428h1v1h-1zM165 424h1v1h-1zM144 401h1v1h-1zM165 433h1v1h-1zM227 417h1v1h-1zM268 418h1v1h-1zM291 420h1v1h-1zM216 426h1v1h-1zM227 426h1v1h-1zM71 435h1v1h-1zM82 435h1v1h-1zM311 407h1v1h-1zM345 409h1v1h-1zM155 416h1v1h-1zM228 400h1v1h-1zM174 429h1v1h-1zM124 410h1v1h-1zM158 412h1v1h-1zM177 425h1v1h-1zM230 428h1v1h-1zM83 418h1v1h-1zM326 405h1v1h-1zM158 430h1v1h-1zM201 410h1v1h-1zM108 420h1v1h-1zM136 402h1v1h-1zM127 433h1v1h-1zM219 418h1v1h-1zM108 429h1v1h-1zM136 411h1v1h-1zM170 413h1v1h-1zM296 400h1v1h-1zM348 401h1v1h-1zM128 416h1v1h-1zM97 410h1v1h-1zM288 414h1v1h-1zM148 403h1v1h-1zM223 406h1v1h-1zM372 395h1v1h-1zM67 415h1v1h-1zM163 401h1v1h-1zM120 430h1v1h-1zM223 415h1v1h-1zM196 398h1v1h-1zM231 428h1v1h-1zM181 409h1v1h-1zM285 399h1v1h-1zM121 404h1v1h-1zM264 425h1v1h-1zM78 433h1v1h-1zM70 429h1v1h-1zM173 414h1v1h-1zM247 400h1v1h-1zM215 429h1v1h-1zM196 425h1v1h-1zM90 416h1v1h-1zM162 432h1v1h-1zM101 425h1v1h-1zM154 428h1v1h-1zM193 410h1v1h-1zM238 409h1v1h-1zM71 430h1v1h-1zM123 431h1v1h-1zM174 415h1v1h-1zM409 407h1v1h-1zM115 436h1v1h-1zM207 421h1v1h-1zM303 407h1v1h-1zM326 409h1v1h-1zM261 401h1v1h-1zM303 416h1v1h-1zM344 417h1v1h-1zM189 403h1v1h-1zM368 393h1v1h-1zM317 418h1v1h-1zM379 402h1v1h-1zM273 393h1v1h-1zM139 402h1v1h-1zM136 415h1v1h-1zM66 427h1v1h-1zM147 424h1v1h-1zM120 407h1v1h-1zM184 410h1v1h-1zM211 427h1v1h-1zM203 423h1v1h-1zM139 429h1v1h-1zM67 410h1v1h-1zM276 404h1v1h-1zM383 390h1v1h-1zM212 410h1v1h-1zM341 393h1v1h-1zM70 415h1v1h-1zM287 422h1v1h-1zM196 411h1v1h-1zM269 395h1v1h-1zM204 424h1v1h-1zM154 405h1v1h-1zM98 415h1v1h-1zM162 418h1v1h-1zM299 405h1v1h-1zM181 431h1v1h-1zM146 410h1v1h-1zM123 417h1v1h-1zM249 404h1v1h-1zM131 430h1v1h-1zM82 425h1v1h-1zM230 400h1v1h-1zM143 404h1v1h-1zM292 393h1v1h-1zM174 419h1v1h-1zM249 422h1v1h-1zM115 431h1v1h-1zM188 412h1v1h-1zM143 422h1v1h-1zM295 398h1v1h-1zM135 418h1v1h-1zM188 421h1v1h-1zM284 407h1v1h-1zM116 414h1v1h-1zM336 408h1v1h-1zM85 408h1v1h-1zM188 430h1v1h-1zM302 415h1v1h-1zM242 410h1v1h-1zM85 417h1v1h-1zM66 413h1v1h-1zM283 420h1v1h-1zM169 407h1v1h-1zM192 409h1v1h-1zM234 424h1v1h-1zM318 396h1v1h-1zM128 415h1v1h-1zM203 418h1v1h-1zM86 409h1v1h-1zM120 411h1v1h-1zM161 412h1v1h-1zM89 405h1v1h-1zM161 430h1v1h-1zM212 414h1v1h-1zM78 423h1v1h-1zM276 417h1v1h-1zM330 397h1v1h-1zM256 420h1v1h-1zM322 402h1v1h-1zM131 407h1v1h-1zM165 409h1v1h-1zM374 412h1v1h-1zM173 431h1v1h-1zM249 399h1v1h-1zM260 399h1v1h-1zM417 401h1v1h-1zM123 421h1v1h-1zM185 405h1v1h-1zM260 408h1v1h-1zM155 401h1v1h-1zM313 411h1v1h-1zM375 404h1v1h-1zM81 424h1v1h-1zM166 410h1v1h-1zM303 397h1v1h-1zM199 407h1v1h-1zM73 429h1v1h-1zM210 416h1v1h-1zM295 402h1v1h-1zM116 409h1v1h-1zM180 412h1v1h-1zM93 416h1v1h-1zM127 418h1v1h-1zM219 403h1v1h-1zM222 399h1v1h-1zM234 401h1v1h-1zM157 428h1v1h-1zM191 430h1v1h-1zM74 421h1v1h-1zM356 399h1v1h-1zM337 395h1v1h-1zM169 402h1v1h-1zM283 424h1v1h-1zM172 407h1v1h-1zM118 436h1v1h-1zM203 422h1v1h-1zM86 413h1v1h-1zM150 416h1v1h-1zM287 403h1v1h-1zM89 409h1v1h-1zM169 429h1v1h-1zM306 407h1v1h-1zM256 406h1v1h-1zM416 395h1v1h-1zM276 421h1v1h-1zM226 411h1v1h-1zM245 424h1v1h-1zM77 431h1v1h-1zM248 420h1v1h-1zM92 429h1v1h-1zM195 414h1v1h-1zM82 406h1v1h-1zM112 407h1v1h-1zM214 427h1v1h-1zM280 400h1v1h-1zM332 410h1v1h-1zM321 419h1v1h-1zM81 419h1v1h-1zM293 418h1v1h-1zM73 424h1v1h-1zM135 408h1v1h-1zM81 437h1v1h-1zM105 404h1v1h-1zM135 417h1v1h-1zM116 413h1v1h-1zM168 414h1v1h-1zM294 401h1v1h-1zM286 397h1v1h-1zM219 407h1v1h-1zM255 428h1v1h-1zM348 390h1v1h-1zM130 415h1v1h-1zM74 425h1v1h-1zM160 428h1v1h-1zM107 422h1v1h-1zM340 395h1v1h-1zM96 431h1v1h-1zM236 414h1v1h-1zM153 407h1v1h-1zM370 414h1v1h-1zM134 412h1v1h-1zM248 397h1v1h-1zM276 416h1v1h-1zM194 426h1v1h-1zM328 417h1v1h-1zM331 413h1v1h-1zM248 406h1v1h-1zM279 421h1v1h-1zM245 428h1v1h-1zM100 437h1v1h-1zM226 424h1v1h-1zM92 433h1v1h-1zM81 405h1v1h-1zM206 427h1v1h-1zM115 416h1v1h-1zM218 401h1v1h-1zM199 397h1v1h-1zM145 426h1v1h-1zM271 413h1v1h-1zM282 413h1v1h-1zM188 406h1v1h-1zM157 400h1v1h-1zM73 428h1v1h-1zM282 422h1v1h-1zM240 416h1v1h-1zM127 408h1v1h-1zM274 418h1v1h-1zM317 398h1v1h-1zM325 402h1v1h-1zM336 402h1v1h-1zM366 412h1v1h-1zM138 414h1v1h-1zM200 398h1v1h-1zM275 401h1v1h-1zM74 420h1v1h-1zM149 423h1v1h-1zM192 403h1v1h-1zM88 413h1v1h-1zM184 399h1v1h-1zM96 426h1v1h-1zM252 417h1v1h-1zM267 415h1v1h-1zM161 406h1v1h-1zM172 406h1v1h-1zM118 435h1v1h-1zM142 402h1v1h-1zM233 422h1v1h-1zM252 426h1v1h-1zM298 393h1v1h-1zM328 412h1v1h-1zM153 420h1v1h-1zM183 421h1v1h-1zM363 397h1v1h-1zM195 404h1v1h-1zM111 432h1v1h-1zM152 433h1v1h-1zM131 410h1v1h-1zM259 416h1v1h-1zM198 409h1v1h-1zM332 409h1v1h-1zM198 418h1v1h-1zM439 392h1v1h-1zM156 412h1v1h-1zM313 414h1v1h-1zM218 405h1v1h-1zM290 421h1v1h-1zM207 414h1v1h-1zM344 401h1v1h-1zM240 411h1v1h-1zM263 413h1v1h-1zM157 404h1v1h-1zM168 404h1v1h-1zM180 406h1v1h-1zM232 416h1v1h-1zM243 416h1v1h-1zM149 409h1v1h-1zM160 409h1v1h-1zM275 396h1v1h-1zM99 408h1v1h-1zM190 428h1v1h-1zM107 421h1v1h-1zM213 430h1v1h-1zM224 430h1v1h-1zM308 411h1v1h-1zM107 430h1v1h-1zM217 400h1v1h-1zM150 410h1v1h-1zM287 397h1v1h-1zM279 393h1v1h-1zM309 394h1v1h-1zM309 403h1v1h-1zM77 407h1v1h-1zM175 412h1v1h-1zM202 429h1v1h-1zM237 396h1v1h-1zM69 412h1v1h-1zM80 412h1v1h-1zM141 428h1v1h-1zM152 428h1v1h-1zM80 421h1v1h-1zM175 430h1v1h-1zM206 408h1v1h-1zM270 411h1v1h-1zM176 404h1v1h-1zM301 417h1v1h-1zM357 412h1v1h-1zM385 401h1v1h-1zM176 422h1v1h-1zM207 400h1v1h-1zM209 419h1v1h-1zM293 412h1v1h-1zM137 421h1v1h-1zM274 408h1v1h-1zM325 392h1v1h-1zM274 417h1v1h-1zM294 395h1v1h-1zM317 397h1v1h-1zM87 420h1v1h-1zM126 402h1v1h-1zM72 431h1v1h-1zM243 420h1v1h-1zM275 400h1v1h-1zM87 438h1v1h-1zM190 423h1v1h-1zM224 425h1v1h-1zM233 403h1v1h-1zM267 405h1v1h-1zM76 410h1v1h-1zM190 432h1v1h-1zM148 426h1v1h-1zM244 412h1v1h-1zM285 413h1v1h-1zM163 424h1v1h-1zM76 428h1v1h-1zM151 431h1v1h-1zM351 404h1v1h-1zM236 426h1v1h-1zM68 433h1v1h-1zM214 398h1v1h-1zM278 401h1v1h-1zM69 407h1v1h-1zM133 410h1v1h-1zM376 406h1v1h-1zM278 410h1v1h-1zM80 425h1v1h-1zM110 426h1v1h-1zM144 428h1v1h-1zM91 422h1v1h-1zM187 408h1v1h-1zM110 435h1v1h-1zM239 409h1v1h-1zM270 424h1v1h-1zM91 431h1v1h-1zM102 431h1v1h-1zM305 400h1v1h-1zM94 436h1v1h-1zM179 422h1v1h-1zM220 423h1v1h-1zM84 410h1v1h-1zM95 410h1v1h-1zM103 423h1v1h-1zM137 425h1v1h-1zM243 397h1v1h-1zM106 419h1v1h-1zM114 432h1v1h-1zM221 415h1v1h-1zM205 398h1v1h-1zM160 408h1v1h-1zM130 404h1v1h-1zM87 433h1v1h-1zM130 413h1v1h-1zM319 401h1v1h-1zM316 414h1v1h-1zM96 420h1v1h-1zM118 420h1v1h-1zM88 416h1v1h-1zM225 403h1v1h-1zM171 432h1v1h-1zM65 423h1v1h-1zM129 426h1v1h-1zM140 426h1v1h-1zM119 403h1v1h-1zM129 435h1v1h-1zM183 415h1v1h-1zM217 417h1v1h-1zM152 409h1v1h-1zM312 398h1v1h-1zM247 427h1v1h-1zM258 427h1v1h-1zM331 411h1v1h-1zM80 411h1v1h-1zM278 414h1v1h-1zM69 420h1v1h-1zM110 421h1v1h-1zM262 397h1v1h-1zM334 413h1v1h-1zM164 401h1v1h-1zM262 406h1v1h-1zM125 428h1v1h-1zM228 413h1v1h-1zM102 435h1v1h-1zM83 431h1v1h-1zM156 415h1v1h-1zM75 427h1v1h-1zM338 401h1v1h-1zM122 431h1v1h-1zM170 417h1v1h-1zM64 408h1v1h-1zM167 430h1v1h-1zM178 430h1v1h-1zM304 417h1v1h-1zM307 413h1v1h-1zM160 403h1v1h-1zM347 397h1v1h-1zM358 397h1v1h-1zM369 406h1v1h-1zM126 410h1v1h-1zM128 429h1v1h-1zM96 406h1v1h-1zM316 409h1v1h-1zM109 434h1v1h-1zM65 409h1v1h-1zM223 428h1v1h-1zM76 418h1v1h-1zM129 430h1v1h-1zM202 414h1v1h-1zM300 419h1v1h-1zM121 426h1v1h-1zM194 410h1v1h-1zM320 397h1v1h-1zM71 425h1v1h-1zM83 408h1v1h-1zM228 408h1v1h-1zM91 430h1v1h-1zM228 417h1v1h-1zM239 417h1v1h-1zM156 410h1v1h-1zM284 416h1v1h-1zM167 407h1v1h-1zM103 413h1v1h-1zM167 416h1v1h-1zM106 409h1v1h-1zM159 412h1v1h-1zM170 412h1v1h-1zM178 425h1v1h-1zM197 429h1v1h-1zM243 396h1v1h-1zM224 410h1v1h-1zM288 413h1v1h-1zM316 395h1v1h-1zM109 420h1v1h-1zM327 395h1v1h-1zM265 420h1v1h-1zM109 429h1v1h-1zM151 407h1v1h-1zM266 394h1v1h-1zM182 422h1v1h-1zM129 425h1v1h-1zM113 408h1v1h-1zM68 418h1v1h-1zM215 428h1v1h-1zM196 424h1v1h-1zM162 431h1v1h-1zM322 420h1v1h-1zM216 411h1v1h-1zM90 433h1v1h-1zM280 423h1v1h-1zM125 409h1v1h-1z"/><path fill="none" stroke="#3CB8E4" stroke-width="1" shape-rendering="crispEdges" d="M64.9 227.8C65.2 226.8 66.7 221.1 67.3 220.6C67.9 220.1 68.6 223.6 69.2 224.4C69.8 225.2 71.6 226.3 71.6 226.3C71.6 226.3 72.0 300.0 72.0 300.0C72.0 300.0 73.0 396.0 73.0 396.0C73.0 396.0 74.5 300.0 74.5 300.0C74.5 300.0 75.4 209.1 75.4 209.1C75.4 209.1 75.5 212.5 76.4 216.3C77.3 220.1 79.9 236.5 81.6 235.4C83.3 234.3 86.2 208.7 88.3 208.6C90.4 208.5 93.9 234.4 96.0 234.5C98.1 234.6 100.9 209.0 103.2 209.6C105.5 210.2 109.5 237.9 112.0 238.6C114.5 239.3 118.2 214.4 120.5 214.8C122.8 215.2 126.0 241.6 128.3 241.6C130.6 241.6 134.4 214.6 136.9 214.8C139.4 215.0 143.5 239.7 145.5 243.3C147.5 246.9 148.7 243.3 150.7 240.2C152.7 237.1 157.4 223.4 159.3 221.7C161.2 220.0 164.3 228.6 164.3 228.6C164.3 228.6 166.9 239.8 166.9 239.8C166.9 239.8 168.3 273.4 168.3 273.4C168.3 273.4 170.3 244.1 170.3 244.1C170.3 244.1 176.4 250.2 176.4 250.2C176.4 250.2 178.1 251.9 178.1 251.9C178.1 251.9 184.1 253.3 184.1 253.3C184.1 253.3 195.3 251.0 195.3 251.0C195.3 251.0 204.8 240.7 204.8 240.7C204.8 240.7 210.9 249.3 210.9 249.3C210.9 249.3 216.0 250.2 216.0 250.2C216.0 250.2 220.0 253.6 220.0 253.6C220.0 253.6 231.4 261.7 231.4 261.7C231.4 261.7 246.0 235.5 246.0 235.5C246.0 235.5 254.7 266.0 254.7 266.0C254.7 266.0 259.8 261.7 259.8 261.7C259.8 261.7 263.8 241.9 263.8 241.9C263.8 241.9 266.7 268.6 266.7 268.6C266.7 268.6 267.4 330.2 267.4 330.2C267.4 330.2 268.8 267.2 268.8 267.2C268.8 267.2 270.0 268.0 270.0 268.0C270.0 268.0 274.3 243.7 274.3 243.7C274.3 243.7 277.2 263.7 277.2 263.7C277.2 263.7 282.9 251.5 282.9 251.5C282.9 251.5 285.8 266.6 285.8 266.6C285.8 266.6 290.8 252.3 290.8 252.3C290.8 252.3 293.7 268.0 293.7 268.0C293.7 268.0 297.3 249.4 297.3 249.4C297.3 249.4 300.8 270.9 300.8 270.9C300.8 270.9 303.7 254.4 303.7 254.4C303.7 254.4 307.3 272.3 307.3 272.3C307.3 272.3 309.5 260.9 309.5 260.9C309.5 260.9 312.3 278.0 312.3 278.0C312.3 278.0 314.5 254.4 314.5 254.4C314.5 254.4 318.1 272.3 318.1 272.3C318.1 272.3 319.5 265.2 319.5 265.2C319.5 265.2 322.4 275.2 322.4 275.2C322.4 275.2 324.5 255.8 324.5 255.8C324.5 255.8 329.3 280.9 329.3 280.9C329.3 280.9 331.5 260.1 331.5 260.1C331.5 260.1 333.6 278.0 333.6 278.0C333.6 278.0 335.3 260.8 335.3 260.8C335.3 260.8 337.6 303.9 337.6 303.9C337.6 303.9 339.3 264.4 339.3 264.4C339.3 264.4 341.5 278.0 341.5 278.0C341.5 278.0 343.7 268.7 343.7 268.7C343.7 268.7 346.5 276.6 346.5 276.6C346.5 276.6 350.1 286.7 350.1 286.7C350.1 286.7 353.7 272.3 353.7 272.3C353.7 272.3 356.6 285.9 356.6 285.9C356.6 285.9 360.2 268.0 360.2 268.0C360.2 268.0 364.5 291.7 364.5 291.7C364.5 291.7 367.3 268.0 367.3 268.0C367.3 268.0 371.6 291.0 371.6 291.0C371.6 291.0 375.2 293.1 375.2 293.1C375.2 293.1 384.5 285.2 384.5 285.2C384.5 285.2 387.9 280.9 387.9 280.9C387.9 280.9 395.1 300.4 395.1 300.4C395.1 300.4 398.0 297.5 398.0 297.5C398.0 297.5 400.9 279.5 400.9 279.5C400.9 279.5 402.7 322.0 402.7 322.0C402.7 322.0 404.5 306.0 404.5 306.0C404.5 306.0 407.3 286.7 407.3 286.7C407.3 286.7 410.9 303.2 410.9 303.2C410.9 303.2 413.8 286.7 413.8 286.7C413.8 286.7 416.0 306.1 416.0 306.1C416.0 306.1 417.7 286.7 417.7 286.7C417.7 286.7 420.3 306.8 420.3 306.8C420.3 306.8 422.4 290.3 422.4 290.3C422.4 290.3 425.3 308.3 425.3 308.3C425.3 308.3 427.5 292.4 427.5 292.4C427.5 292.4 430.4 311.9 430.4 311.9C430.4 311.9 433.2 297.5 433.2 297.5C433.2 297.5 436.8 294.6 436.8 294.6C436.8 294.6 441.9 296.8 441.9 296.8"/><g><ellipse cx="24.5" cy="19" rx="3.8" ry="3" fill="#9aa0b8" stroke="#202040" stroke-width="0.8"/><ellipse cx="27.5" cy="14.8" rx="4.6" ry="3" fill="#F4E6B0" stroke="#402010" stroke-width="0.8"/><ellipse cx="27.5" cy="14.8" rx="1.6" ry="0.9" fill="#C09040"/></g><rect x="260.5" y="57.5" width="5" height="11" rx="1.5" fill="#C0102A" stroke="#000" stroke-width="1"/><rect x="261" y="58" width="4" height="4" fill="#40C0A0"/><circle cx="262.8" cy="70.3" r="3.8" fill="#D01020" stroke="#000" stroke-width="1"/><rect x="261" y="63" width="4" height="6" fill="#C0102A"/><rect x="261" y="69" width="2" height="2" fill="#fff"/><path d="M365 59h7v13h-7z" fill="#606060"/><path d="M364.5 58.5h4l2.5 2.5v10.5h-6.5z" fill="#E8F4FF" stroke="#000" stroke-width="1"/><path d="M368.5 58.5v2.5h2.5" fill="none" stroke="#000" stroke-width="1"/><rect x="365" y="62" width="5" height="1" fill="#3070C0"/><rect x="365" y="65" width="5" height="1" fill="#3070C0"/><rect x="365" y="67" width="5" height="1" fill="#3070C0"/><path d="M371 61h9v13h-9z" fill="#606060"/><path d="M370.5 60.5h6l2.5 2.5v10.5h-8.5z" fill="#F0F0FF" stroke="#000" stroke-width="1"/><path d="M376.5 60.5v2.5h2.5" fill="none" stroke="#000" stroke-width="1"/><rect x="372" y="64" width="5" height="1" fill="#3050A0"/><rect x="372" y="67" width="5" height="1" fill="#3050A0"/><rect x="372" y="69" width="5" height="1" fill="#3050A0"/><path d="M395 59h7v13h-7z" fill="#606060"/><path d="M394.5 58.5h4l2.5 2.5v10.5h-6.5z" fill="#F8FFF8" stroke="#000" stroke-width="1"/><path d="M398.5 58.5v2.5h2.5" fill="none" stroke="#000" stroke-width="1"/><rect x="395" y="63" width="5" height="4" fill="#40B040"/><rect x="395" y="62" width="5" height="1" fill="#204080"/><path d="M402 61h9v13h-9z" fill="#606060"/><path d="M401.5 60.5h6l2.5 2.5v10.5h-8.5z" fill="#F8FFF8" stroke="#000" stroke-width="1"/><path d="M407.5 60.5v2.5h2.5" fill="none" stroke="#000" stroke-width="1"/><rect x="402" y="65" width="6" height="5" fill="#50B030"/><rect x="402" y="64" width="6" height="1" fill="#204080"/><path d="M424.5 58.5h14v14h-13l-1-1z" fill="#2040C0" stroke="#000040" stroke-width="1"/><rect x="428" y="59" width="8" height="7" fill="#E8E8F0"/><rect x="429" y="61" width="6" height="1" fill="#9090A0"/><rect x="429" y="63" width="6" height="1" fill="#9090A0"/><rect x="428" y="69" width="5" height="3" fill="#A0A0B0"/><rect x="434" y="69" width="2" height="3" fill="#E0E0F0"/><rect x="425" y="60" width="1" height="10" fill="#60A0FF"/><circle cx="459" cy="63" r="4.6" fill="#F0E830" stroke="#000" stroke-width="1.6" stroke-dasharray="1.8 1.1"/><circle cx="459" cy="63" r="3.6" fill="#F4EC30"/><circle cx="459" cy="63" r="1.3" fill="#605800"/><circle cx="465.5" cy="68.5" r="4.6" fill="#F0E830" stroke="#000" stroke-width="1.6" stroke-dasharray="1.8 1.1"/><circle cx="465.5" cy="68.5" r="3.6" fill="#F4EC30"/><circle cx="465.5" cy="68.5" r="1.3" fill="#605800"/><path d="M493 57h4v8h5l-7 8l-7-8h5z" fill="#000"/><path d="M580.5 14.5l7 6M587.5 14.5l-7 6" stroke="#000" stroke-width="1.6"/><path d="M48.5 97.5h10l3 3v12h-13z" fill="#F4FAFF" stroke="#000" stroke-width="1"/><ellipse cx="54.7" cy="104" rx="2.5" ry="4.5" fill="#C020C0" stroke="#300030" stroke-width="0.8"/><ellipse cx="54.7" cy="110.5" rx="1.8" ry="1.2" fill="#800080"/><path d="M51.5 118.5q0-3.5 3.2-3.5t3.2 3.5l-1.8 6.5h-2.8z" fill="#D8E020" stroke="#000" stroke-width="1"/><ellipse cx="54.7" cy="128.8" rx="2.6" ry="1.8" fill="#B8C020" stroke="#000" stroke-width="1"/><ellipse cx="140" cy="119.3" rx="2.7" ry="2" fill="#40C0F0" stroke="#000" stroke-width="0.8"/><path d="M137.5 122.5h5v9h1v1h-8v-1h2z" fill="#2060E8" stroke="#000" stroke-width="1"/><rect x="182.5" y="97.5" width="15" height="15" fill="#F8F8C0" stroke="#000" stroke-width="1"/><path d="M183 112v-6h2v-2h2v4h2v-8h2v6h2v-3h2v3h2v6z" fill="#20C040"/><rect x="183" y="109" width="14" height="3" fill="#108860"/><path d="M221.5 117.5h5v5h5v5h-5v5h-5v-5h-5v-5h5z" fill="#E02828" stroke="#400000" stroke-width="1"/><path d="M304.5 101.5h3l5-4v14l-5-4h-3z" fill="#F0E830" stroke="#000" stroke-width="1"/><path d="M315 101q2 3.5 0 7M317.5 99.5q3 5 0 10" fill="none" stroke="#000" stroke-width="1"/><path d="M308 125l7 6" stroke="#000" stroke-width="4"/><path d="M308 125l7 6" stroke="#2030A0" stroke-width="2.4"/><circle cx="305.3" cy="122" r="5" fill="#40D040" stroke="#000" stroke-width="1"/><rect x="383.5" y="97.5" width="15" height="15" fill="#FAF4C0" stroke="#000" stroke-width="1"/><g fill="#A04020"><rect x="385" y="107" width="1" height="1"/><rect x="388" y="105" width="1" height="1"/><rect x="391" y="108" width="1" height="1"/><rect x="393" y="103" width="1" height="1"/><rect x="395" y="101" width="1" height="1"/><rect x="390" y="103" width="1" height="1"/><rect x="386" y="110" width="1" height="1"/><rect x="395" y="106" width="1" height="1"/><rect x="392" y="110" width="1" height="1"/></g><defs><linearGradient id="fg" x1="0" y1="0" x2="1" y2="1"><stop offset="0" stop-color="#F4E488"/><stop offset="1" stop-color="#C09818"/></linearGradient></defs><path d="M409.5 132.5v-13l1.5-2h4.5l1.5 2h5v13z" fill="#E8D870" stroke="#000" stroke-width="1"/><path d="M408.5 132.5v-10.5h13v10.5z" fill="url(#fg)" stroke="#000" stroke-width="1"/><rect x="492.5" y="97.5" width="15" height="15" fill="#F8F8C8" stroke="#000" stroke-width="1"/><path d="M493 112v-7l2 1v6z" fill="#20A050"/><path d="M493 105v-3h2v3l2 1v6h-4z" fill="#30B060"/><rect x="498.5" y="104.5" width="9" height="8" fill="#E8E0F8" stroke="#000" stroke-width="1"/><g fill="#4040A0"><rect x="500" y="106" width="1" height="1"/><rect x="502" y="106" width="1" height="1"/><rect x="504" y="106" width="1" height="1"/></g><g fill="#C04040"><rect x="500" y="108" width="1" height="1"/><rect x="502" y="108" width="1" height="1"/><rect x="504" y="108" width="1" height="1"/><rect x="500" y="110" width="1" height="1"/><rect x="502" y="110" width="1" height="1"/><rect x="504" y="110" width="1" height="1"/></g><defs><linearGradient id="tg" x1="0" x2="1"><stop offset="0" stop-color="#606060"/><stop offset="0.4" stop-color="#E0E0E0"/><stop offset="1" stop-color="#404040"/></linearGradient></defs><path d="M517.5 118.5h12v2h-12z" fill="url(#tg)" stroke="#000" stroke-width="1"/><path d="M518.5 120.5h10l-1 12h-8z" fill="url(#tg)" stroke="#000" stroke-width="1"/><rect x="521" y="116.5" width="5" height="2" fill="#808080" stroke="#000" stroke-width="1"/><circle cx="490" cy="188" r="5.5" fill="#fff"/><path d="M493.9 184.1A5.5 5.5 0 0 0 486.1 191.9" fill="none" stroke="#808080" stroke-width="1"/><path d="M493.2 184.8A4.5 4.5 0 0 0 486.8 191.2" fill="none" stroke="#404040" stroke-width="1"/><path d="M493.2 184.8A4.5 4.5 0 0 1 486.8 191.2" fill="none" stroke="#D4D0C8" stroke-width="1"/><rect x="488" y="187" width="4" height="2" fill="#000"/><rect x="489" y="186" width="2" height="4" fill="#000"/><circle cx="490" cy="203" r="5.5" fill="#fff"/><path d="M493.9 199.1A5.5 5.5 0 0 0 486.1 206.9" fill="none" stroke="#808080" stroke-width="1"/><path d="M493.2 199.8A4.5 4.5 0 0 0 486.8 206.2" fill="none" stroke="#404040" stroke-width="1"/><path d="M493.2 199.8A4.5 4.5 0 0 1 486.8 206.2" fill="none" stroke="#D4D0C8" stroke-width="1"/><path fill="#000" d="M492 267h1v1h-1zM491 268h1v1h-1zM492 268h1v1h-1zM486 269h1v1h-1zM490 269h1v1h-1zM491 269h1v1h-1zM492 269h1v1h-1zM486 270h1v1h-1zM487 270h1v1h-1zM489 270h1v1h-1zM490 270h1v1h-1zM491 270h1v1h-1zM486 271h1v1h-1zM487 271h1v1h-1zM488 271h1v1h-1zM489 271h1v1h-1zM490 271h1v1h-1zM487 272h1v1h-1zM488 272h1v1h-1zM489 272h1v1h-1zM488 273h1v1h-1z"/><path fill="#000" d="M492 384h1v1h-1zM491 385h1v1h-1zM492 385h1v1h-1zM486 386h1v1h-1zM490 386h1v1h-1zM491 386h1v1h-1zM492 386h1v1h-1zM486 387h1v1h-1zM487 387h1v1h-1zM489 387h1v1h-1zM490 387h1v1h-1zM491 387h1v1h-1zM486 388h1v1h-1zM487 388h1v1h-1zM488 388h1v1h-1zM489 388h1v1h-1zM490 388h1v1h-1zM487 389h1v1h-1zM488 389h1v1h-1zM489 389h1v1h-1zM488 390h1v1h-1z"/><path fill="#000" d="M492 414h1v1h-1zM491 415h1v1h-1zM492 415h1v1h-1zM486 416h1v1h-1zM490 416h1v1h-1zM491 416h1v1h-1zM492 416h1v1h-1zM486 417h1v1h-1zM487 417h1v1h-1zM489 417h1v1h-1zM490 417h1v1h-1zM491 417h1v1h-1zM486 418h1v1h-1zM487 418h1v1h-1zM488 418h1v1h-1zM489 418h1v1h-1zM490 418h1v1h-1zM487 419h1v1h-1zM488 419h1v1h-1zM489 419h1v1h-1zM488 420h1v1h-1z"/><path fill="#fff" d="M121 13h7v1h-7zM134 13h2v1h-2zM148 13h2v1h-2zM156 13h10v1h-10zM183 13h8v1h-8zM116 14h5v1h-5zM123 14h2v1h-2zM132 14h7v1h-7zM143 14h11v1h-11zM156 14h2v1h-2zM160 14h2v1h-2zM164 14h2v1h-2zM169 14h10v1h-10zM183 14h2v1h-2zM189 14h2v1h-2zM118 15h2v1h-2zM121 15h7v1h-7zM132 15h4v1h-4zM137 15h2v1h-2zM143 15h4v1h-4zM152 15h2v1h-2zM156 15h2v1h-2zM160 15h2v1h-2zM164 15h2v1h-2zM173 15h2v1h-2zM183 15h8v1h-8zM118 16h2v1h-2zM121 16h4v1h-4zM126 16h2v1h-2zM132 16h2v1h-2zM135 16h4v1h-4zM142 16h2v1h-2zM146 16h4v1h-4zM151 16h2v1h-2zM156 16h10v1h-10zM173 16h2v1h-2zM183 16h2v1h-2zM189 16h2v1h-2zM117 17h11v1h-11zM130 17h11v1h-11zM144 17h2v1h-2zM148 17h2v1h-2zM156 17h2v1h-2zM160 17h2v1h-2zM164 17h2v1h-2zM173 17h2v1h-2zM183 17h8v1h-8zM116 18h9v1h-9zM126 18h2v1h-2zM132 18h4v1h-4zM137 18h2v1h-2zM145 18h2v1h-2zM148 18h2v1h-2zM156 18h2v1h-2zM160 18h2v1h-2zM164 18h2v1h-2zM173 18h2v1h-2zM183 18h2v1h-2zM189 18h2v1h-2zM117 19h11v1h-11zM131 19h2v1h-2zM135 19h4v1h-4zM143 19h11v1h-11zM156 19h10v1h-10zM173 19h2v1h-2zM183 19h8v1h-8zM117 20h5v1h-5zM123 20h2v1h-2zM131 20h9v1h-9zM148 20h2v1h-2zM156 20h2v1h-2zM160 20h2v1h-2zM164 20h2v1h-2zM173 20h2v1h-2zM183 20h2v1h-2zM189 20h2v1h-2zM117 21h8v1h-8zM131 21h4v1h-4zM136 21h4v1h-4zM147 21h4v1h-4zM156 21h2v1h-2zM160 21h2v1h-2zM164 21h2v1h-2zM173 21h2v1h-2zM181 21h12v1h-12zM117 22h4v1h-4zM122 22h3v1h-3zM131 22h4v1h-4zM136 22h4v1h-4zM146 22h2v1h-2zM150 22h2v1h-2zM155 22h2v1h-2zM160 22h2v1h-2zM164 22h2v1h-2zM168 22h12v1h-12zM184 22h2v1h-2zM188 22h2v1h-2zM120 23h3v1h-3zM124 23h4v1h-4zM129 23h12v1h-12zM143 23h4v1h-4zM151 23h3v1h-3zM155 23h2v1h-2zM160 23h2v1h-2zM163 23h3v1h-3zM181 23h4v1h-4zM189 23h4v1h-4z"/><path fill="#000" d="M24 31h1v1h-1zM35 31h1v1h-1zM39 31h1v1h-1zM47 31h1v1h-1zM54 31h1v1h-1zM25 32h1v1h-1zM35 32h1v1h-1zM37 32h1v1h-1zM39 32h1v1h-1zM46 32h1v1h-1zM55 32h1v1h-1zM20 33h11v1h-11zM34 33h1v1h-1zM37 33h1v1h-1zM39 33h1v1h-1zM46 33h1v1h-1zM48 33h5v1h-5zM55 33h1v1h-1zM23 34h1v1h-1zM27 34h1v1h-1zM34 34h1v1h-1zM36 34h6v1h-6zM45 34h1v1h-1zM48 34h1v1h-1zM56 34h1v1h-1zM23 35h1v1h-1zM27 35h1v1h-1zM33 35h3v1h-3zM39 35h1v1h-1zM45 35h1v1h-1zM48 35h1v1h-1zM56 35h1v1h-1zM23 36h1v1h-1zM27 36h1v1h-1zM32 36h1v1h-1zM34 36h1v1h-1zM39 36h1v1h-1zM45 36h1v1h-1zM48 36h4v1h-4zM56 36h1v1h-1zM24 37h1v1h-1zM26 37h1v1h-1zM34 37h1v1h-1zM36 37h7v1h-7zM45 37h1v1h-1zM48 37h1v1h-1zM56 37h1v1h-1zM24 38h1v1h-1zM26 38h1v1h-1zM34 38h1v1h-1zM39 38h1v1h-1zM45 38h1v1h-1zM48 38h1v1h-1zM56 38h1v1h-1zM25 39h1v1h-1zM34 39h1v1h-1zM39 39h1v1h-1zM46 39h1v1h-1zM48 39h1v1h-1zM55 39h1v1h-1zM23 40h2v1h-2zM26 40h2v1h-2zM34 40h1v1h-1zM39 40h1v1h-1zM46 40h1v1h-1zM48 40h1v1h-1zM55 40h1v1h-1zM20 41h3v1h-3zM28 41h3v1h-3zM34 41h1v1h-1zM39 41h1v1h-1zM47 41h1v1h-1zM54 41h1v1h-1z"/><path fill="#000" d="M74 31h1v1h-1zM90 31h1v1h-1zM98 31h1v1h-1zM108 31h1v1h-1zM72 32h5v1h-5zM78 32h4v1h-4zM84 32h4v1h-4zM90 32h1v1h-1zM97 32h1v1h-1zM109 32h1v1h-1zM74 33h1v1h-1zM78 33h1v1h-1zM81 33h1v1h-1zM84 33h1v1h-1zM87 33h1v1h-1zM90 33h1v1h-1zM97 33h1v1h-1zM99 33h1v1h-1zM104 33h1v1h-1zM109 33h1v1h-1zM72 34h5v1h-5zM78 34h1v1h-1zM80 34h1v1h-1zM84 34h1v1h-1zM87 34h1v1h-1zM89 34h5v1h-5zM96 34h1v1h-1zM99 34h1v1h-1zM104 34h1v1h-1zM110 34h1v1h-1zM74 35h1v1h-1zM78 35h1v1h-1zM81 35h1v1h-1zM84 35h4v1h-4zM90 35h1v1h-1zM93 35h1v1h-1zM96 35h1v1h-1zM99 35h1v1h-1zM104 35h1v1h-1zM110 35h1v1h-1zM71 36h6v1h-6zM78 36h4v1h-4zM84 36h1v1h-1zM87 36h1v1h-1zM90 36h1v1h-1zM93 36h1v1h-1zM96 36h1v1h-1zM99 36h6v1h-6zM110 36h1v1h-1zM73 37h1v1h-1zM76 37h1v1h-1zM78 37h1v1h-1zM84 37h4v1h-4zM90 37h1v1h-1zM93 37h1v1h-1zM96 37h1v1h-1zM99 37h1v1h-1zM104 37h1v1h-1zM110 37h1v1h-1zM72 38h9v1h-9zM84 38h1v1h-1zM87 38h1v1h-1zM90 38h1v1h-1zM93 38h1v1h-1zM96 38h1v1h-1zM99 38h1v1h-1zM104 38h1v1h-1zM110 38h1v1h-1zM73 39h1v1h-1zM76 39h1v1h-1zM80 39h1v1h-1zM84 39h1v1h-1zM86 39h4v1h-4zM93 39h1v1h-1zM97 39h1v1h-1zM99 39h1v1h-1zM104 39h1v1h-1zM109 39h1v1h-1zM73 40h1v1h-1zM76 40h1v1h-1zM79 40h2v1h-2zM83 40h3v1h-3zM89 40h1v1h-1zM91 40h1v1h-1zM93 40h1v1h-1zM97 40h1v1h-1zM99 40h1v1h-1zM104 40h1v1h-1zM109 40h1v1h-1zM76 41h1v1h-1zM88 41h1v1h-1zM92 41h1v1h-1zM98 41h1v1h-1zM108 41h1v1h-1z"/><path fill="#000" d="M547 58h1v1h-1zM551 58h6v1h-6zM564 58h1v1h-1zM548 59h1v1h-1zM551 59h1v1h-1zM556 59h1v1h-1zM560 59h1v1h-1zM564 59h1v1h-1zM568 59h1v1h-1zM548 60h1v1h-1zM551 60h6v1h-6zM560 60h1v1h-1zM564 60h1v1h-1zM568 60h1v1h-1zM551 61h1v1h-1zM556 61h1v1h-1zM560 61h1v1h-1zM564 61h1v1h-1zM568 61h1v1h-1zM547 62h2v1h-2zM551 62h6v1h-6zM560 62h9v1h-9zM548 63h1v1h-1zM551 63h1v1h-1zM564 63h1v1h-1zM548 64h1v1h-1zM551 64h1v1h-1zM553 64h2v1h-2zM556 64h1v1h-1zM559 64h1v1h-1zM564 64h1v1h-1zM569 64h1v1h-1zM548 65h1v1h-1zM551 65h1v1h-1zM555 65h1v1h-1zM559 65h1v1h-1zM564 65h1v1h-1zM569 65h1v1h-1zM548 66h1v1h-1zM551 66h3v1h-3zM556 66h1v1h-1zM559 66h1v1h-1zM564 66h1v1h-1zM569 66h1v1h-1zM547 67h1v1h-1zM549 67h2v1h-2zM559 67h1v1h-1zM564 67h1v1h-1zM569 67h1v1h-1zM547 68h1v1h-1zM551 68h7v1h-7zM559 68h11v1h-11z"/><path fill="#000" d="M75 101h1v1h-1zM86 101h1v1h-1zM90 101h1v1h-1zM98 101h1v1h-1zM102 101h1v1h-1zM111 101h1v1h-1zM113 101h1v1h-1zM119 101h1v1h-1zM121 101h5v1h-5zM129 101h1v1h-1zM132 101h1v1h-1zM138 101h1v1h-1zM140 101h1v1h-1zM76 102h1v1h-1zM86 102h1v1h-1zM88 102h1v1h-1zM90 102h1v1h-1zM96 102h9v1h-9zM107 102h1v1h-1zM111 102h1v1h-1zM114 102h1v1h-1zM120 102h2v1h-2zM125 102h1v1h-1zM127 102h1v1h-1zM129 102h1v1h-1zM133 102h1v1h-1zM138 102h1v1h-1zM141 102h1v1h-1zM71 103h11v1h-11zM85 103h1v1h-1zM88 103h1v1h-1zM90 103h1v1h-1zM98 103h1v1h-1zM102 103h1v1h-1zM108 103h1v1h-1zM111 103h7v1h-7zM121 103h1v1h-1zM123 103h1v1h-1zM125 103h1v1h-1zM127 103h1v1h-1zM129 103h1v1h-1zM134 103h8v1h-8zM74 104h1v1h-1zM78 104h1v1h-1zM85 104h1v1h-1zM87 104h6v1h-6zM98 104h3v1h-3zM102 104h1v1h-1zM108 104h1v1h-1zM110 104h2v1h-2zM114 104h1v1h-1zM119 104h1v1h-1zM121 104h1v1h-1zM123 104h1v1h-1zM125 104h1v1h-1zM127 104h1v1h-1zM129 104h1v1h-1zM138 104h1v1h-1zM74 105h1v1h-1zM78 105h1v1h-1zM84 105h3v1h-3zM90 105h1v1h-1zM98 105h1v1h-1zM100 105h3v1h-3zM111 105h1v1h-1zM114 105h1v1h-1zM120 105h2v1h-2zM123 105h1v1h-1zM125 105h1v1h-1zM127 105h1v1h-1zM129 105h1v1h-1zM131 105h3v1h-3zM135 105h4v1h-4zM74 106h1v1h-1zM78 106h1v1h-1zM83 106h1v1h-1zM85 106h1v1h-1zM90 106h1v1h-1zM98 106h1v1h-1zM102 106h1v1h-1zM109 106h1v1h-1zM111 106h6v1h-6zM121 106h1v1h-1zM123 106h1v1h-1zM125 106h1v1h-1zM127 106h1v1h-1zM129 106h1v1h-1zM133 106h1v1h-1zM136 106h1v1h-1zM138 106h1v1h-1zM75 107h1v1h-1zM77 107h1v1h-1zM85 107h1v1h-1zM87 107h7v1h-7zM95 107h11v1h-11zM109 107h1v1h-1zM111 107h1v1h-1zM114 107h1v1h-1zM121 107h1v1h-1zM123 107h1v1h-1zM125 107h1v1h-1zM127 107h1v1h-1zM129 107h1v1h-1zM133 107h1v1h-1zM136 107h1v1h-1zM138 107h1v1h-1zM75 108h1v1h-1zM77 108h1v1h-1zM85 108h1v1h-1zM90 108h1v1h-1zM97 108h1v1h-1zM100 108h1v1h-1zM103 108h1v1h-1zM107 108h2v1h-2zM111 108h6v1h-6zM119 108h2v1h-2zM123 108h1v1h-1zM127 108h1v1h-1zM129 108h1v1h-1zM133 108h1v1h-1zM136 108h1v1h-1zM139 108h1v1h-1zM141 108h1v1h-1zM76 109h1v1h-1zM85 109h1v1h-1zM90 109h1v1h-1zM95 109h2v1h-2zM98 109h5v1h-5zM104 109h2v1h-2zM108 109h1v1h-1zM111 109h1v1h-1zM114 109h1v1h-1zM120 109h1v1h-1zM122 109h1v1h-1zM124 109h1v1h-1zM129 109h1v1h-1zM133 109h1v1h-1zM136 109h2v1h-2zM139 109h1v1h-1zM141 109h1v1h-1zM74 110h2v1h-2zM77 110h2v1h-2zM85 110h1v1h-1zM90 110h1v1h-1zM100 110h1v1h-1zM108 110h1v1h-1zM111 110h1v1h-1zM114 110h1v1h-1zM120 110h2v1h-2zM125 110h1v1h-1zM129 110h1v1h-1zM133 110h3v1h-3zM140 110h2v1h-2zM71 111h3v1h-3zM79 111h3v1h-3zM85 111h1v1h-1zM90 111h1v1h-1zM95 111h11v1h-11zM108 111h1v1h-1zM111 111h7v1h-7zM120 111h1v1h-1zM127 111h3v1h-3zM133 111h1v1h-1zM141 111h1v1h-1z"/><path fill="#000" d="M210 101h1v1h-1zM214 101h1v1h-1zM222 101h1v1h-1zM233 101h1v1h-1zM235 101h1v1h-1zM243 101h1v1h-1zM248 101h1v1h-1zM254 101h4v1h-4zM259 101h4v1h-4zM205 102h4v1h-4zM211 102h1v1h-1zM213 102h1v1h-1zM220 102h6v1h-6zM230 102h1v1h-1zM233 102h1v1h-1zM235 102h1v1h-1zM243 102h1v1h-1zM245 102h7v1h-7zM254 102h1v1h-1zM257 102h1v1h-1zM259 102h1v1h-1zM262 102h1v1h-1zM207 103h1v1h-1zM209 103h7v1h-7zM220 103h1v1h-1zM222 103h1v1h-1zM225 103h1v1h-1zM230 103h1v1h-1zM233 103h1v1h-1zM235 103h5v1h-5zM241 103h5v1h-5zM251 103h1v1h-1zM254 103h1v1h-1zM257 103h1v1h-1zM259 103h1v1h-1zM262 103h1v1h-1zM207 104h1v1h-1zM210 104h1v1h-1zM213 104h1v1h-1zM220 104h1v1h-1zM223 104h1v1h-1zM225 104h1v1h-1zM230 104h1v1h-1zM233 104h1v1h-1zM235 104h1v1h-1zM243 104h1v1h-1zM247 104h1v1h-1zM249 104h1v1h-1zM254 104h4v1h-4zM259 104h4v1h-4zM206 105h3v1h-3zM210 105h1v1h-1zM213 105h1v1h-1zM215 105h1v1h-1zM218 105h10v1h-10zM230 105h1v1h-1zM233 105h2v1h-2zM237 105h1v1h-1zM243 105h1v1h-1zM246 105h1v1h-1zM250 105h1v1h-1zM258 105h1v1h-1zM261 105h1v1h-1zM205 106h2v1h-2zM208 106h2v1h-2zM211 106h2v1h-2zM215 106h1v1h-1zM220 106h1v1h-1zM222 106h1v1h-1zM225 106h1v1h-1zM230 106h1v1h-1zM233 106h1v1h-1zM238 106h1v1h-1zM243 106h3v1h-3zM251 106h1v1h-1zM253 106h11v1h-11zM206 107h1v1h-1zM208 107h7v1h-7zM219 107h1v1h-1zM223 107h1v1h-1zM225 107h1v1h-1zM233 107h1v1h-1zM242 107h2v1h-2zM246 107h5v1h-5zM256 107h1v1h-1zM260 107h1v1h-1zM206 108h1v1h-1zM208 108h1v1h-1zM211 108h1v1h-1zM214 108h1v1h-1zM219 108h8v1h-8zM230 108h9v1h-9zM241 108h1v1h-1zM243 108h1v1h-1zM248 108h1v1h-1zM253 108h5v1h-5zM259 108h5v1h-5zM206 109h3v1h-3zM210 109h1v1h-1zM213 109h1v1h-1zM219 109h1v1h-1zM221 109h1v1h-1zM224 109h1v1h-1zM226 109h1v1h-1zM230 109h1v1h-1zM233 109h1v1h-1zM235 109h1v1h-1zM238 109h1v1h-1zM243 109h1v1h-1zM248 109h1v1h-1zM254 109h1v1h-1zM257 109h1v1h-1zM259 109h1v1h-1zM262 109h1v1h-1zM206 110h1v1h-1zM208 110h2v1h-2zM211 110h2v1h-2zM214 110h1v1h-1zM219 110h1v1h-1zM221 110h1v1h-1zM224 110h1v1h-1zM226 110h1v1h-1zM230 110h1v1h-1zM233 110h1v1h-1zM235 110h1v1h-1zM238 110h1v1h-1zM243 110h1v1h-1zM248 110h1v1h-1zM254 110h1v1h-1zM257 110h1v1h-1zM259 110h1v1h-1zM262 110h1v1h-1zM208 111h3v1h-3zM212 111h2v1h-2zM215 111h1v1h-1zM217 111h11v1h-11zM229 111h11v1h-11zM241 111h3v1h-3zM245 111h7v1h-7zM254 111h4v1h-4zM259 111h4v1h-4z"/><path fill="#000" d="M404 101h3v1h-3zM411 101h1v1h-1zM418 101h1v1h-1zM432 101h1v1h-1zM440 101h6v1h-6zM404 102h1v1h-1zM406 102h2v1h-2zM409 102h6v1h-6zM418 102h1v1h-1zM421 102h4v1h-4zM428 102h11v1h-11zM441 102h1v1h-1zM444 102h1v1h-1zM446 102h5v1h-5zM404 103h1v1h-1zM406 103h1v1h-1zM408 103h1v1h-1zM410 103h1v1h-1zM418 103h1v1h-1zM421 103h1v1h-1zM424 103h1v1h-1zM431 103h1v1h-1zM441 103h1v1h-1zM444 103h1v1h-1zM446 103h1v1h-1zM450 103h1v1h-1zM404 104h2v1h-2zM409 104h5v1h-5zM416 104h6v1h-6zM424 104h1v1h-1zM430 104h1v1h-1zM432 104h6v1h-6zM441 104h4v1h-4zM446 104h1v1h-1zM450 104h1v1h-1zM404 105h1v1h-1zM406 105h1v1h-1zM410 105h1v1h-1zM413 105h1v1h-1zM418 105h1v1h-1zM421 105h1v1h-1zM424 105h1v1h-1zM430 105h1v1h-1zM436 105h1v1h-1zM441 105h1v1h-1zM444 105h1v1h-1zM447 105h1v1h-1zM449 105h1v1h-1zM404 106h1v1h-1zM406 106h3v1h-3zM410 106h4v1h-4zM417 106h3v1h-3zM421 106h1v1h-1zM424 106h1v1h-1zM429 106h2v1h-2zM435 106h1v1h-1zM441 106h4v1h-4zM447 106h1v1h-1zM449 106h1v1h-1zM404 107h1v1h-1zM406 107h1v1h-1zM408 107h1v1h-1zM410 107h1v1h-1zM413 107h1v1h-1zM417 107h2v1h-2zM420 107h2v1h-2zM424 107h1v1h-1zM428 107h1v1h-1zM430 107h9v1h-9zM441 107h1v1h-1zM444 107h1v1h-1zM448 107h1v1h-1zM404 108h2v1h-2zM408 108h1v1h-1zM410 108h4v1h-4zM416 108h1v1h-1zM418 108h1v1h-1zM421 108h1v1h-1zM424 108h1v1h-1zM430 108h1v1h-1zM435 108h1v1h-1zM441 108h1v1h-1zM444 108h2v1h-2zM448 108h1v1h-1zM404 109h1v1h-1zM408 109h1v1h-1zM410 109h1v1h-1zM413 109h1v1h-1zM416 109h1v1h-1zM418 109h1v1h-1zM421 109h1v1h-1zM424 109h1v1h-1zM430 109h1v1h-1zM435 109h1v1h-1zM440 109h5v1h-5zM447 109h1v1h-1zM449 109h1v1h-1zM404 110h1v1h-1zM408 110h2v1h-2zM418 110h1v1h-1zM420 110h1v1h-1zM424 110h1v1h-1zM426 110h1v1h-1zM430 110h1v1h-1zM435 110h1v1h-1zM444 110h1v1h-1zM446 110h1v1h-1zM449 110h1v1h-1zM404 111h1v1h-1zM407 111h1v1h-1zM410 111h5v1h-5zM418 111h2v1h-2zM424 111h3v1h-3zM430 111h1v1h-1zM433 111h3v1h-3zM444 111h2v1h-2zM450 111h1v1h-1z"/><path fill="#000" d="M517 101h1v1h-1zM522 101h1v1h-1zM528 101h9v1h-9zM539 101h1v1h-1zM541 101h5v1h-5zM549 101h1v1h-1zM552 101h1v1h-1zM558 101h1v1h-1zM560 101h1v1h-1zM517 102h1v1h-1zM523 102h1v1h-1zM528 102h1v1h-1zM536 102h1v1h-1zM540 102h2v1h-2zM545 102h1v1h-1zM547 102h1v1h-1zM549 102h1v1h-1zM553 102h1v1h-1zM558 102h1v1h-1zM561 102h1v1h-1zM515 103h11v1h-11zM528 103h9v1h-9zM541 103h1v1h-1zM543 103h1v1h-1zM545 103h1v1h-1zM547 103h1v1h-1zM549 103h1v1h-1zM554 103h8v1h-8zM517 104h1v1h-1zM520 104h1v1h-1zM528 104h1v1h-1zM531 104h1v1h-1zM534 104h1v1h-1zM539 104h1v1h-1zM541 104h1v1h-1zM543 104h1v1h-1zM545 104h1v1h-1zM547 104h1v1h-1zM549 104h1v1h-1zM558 104h1v1h-1zM517 105h1v1h-1zM519 105h2v1h-2zM528 105h9v1h-9zM540 105h2v1h-2zM543 105h1v1h-1zM545 105h1v1h-1zM547 105h1v1h-1zM549 105h1v1h-1zM551 105h3v1h-3zM555 105h4v1h-4zM517 106h2v1h-2zM520 106h1v1h-1zM528 106h1v1h-1zM531 106h1v1h-1zM534 106h1v1h-1zM541 106h1v1h-1zM543 106h1v1h-1zM545 106h1v1h-1zM547 106h1v1h-1zM549 106h1v1h-1zM553 106h1v1h-1zM556 106h1v1h-1zM558 106h1v1h-1zM516 107h2v1h-2zM520 107h1v1h-1zM528 107h10v1h-10zM541 107h1v1h-1zM543 107h1v1h-1zM545 107h1v1h-1zM547 107h1v1h-1zM549 107h1v1h-1zM553 107h1v1h-1zM556 107h1v1h-1zM558 107h1v1h-1zM515 108h1v1h-1zM517 108h1v1h-1zM520 108h1v1h-1zM528 108h1v1h-1zM530 108h1v1h-1zM533 108h1v1h-1zM536 108h1v1h-1zM539 108h2v1h-2zM543 108h1v1h-1zM547 108h1v1h-1zM549 108h1v1h-1zM553 108h1v1h-1zM556 108h1v1h-1zM559 108h1v1h-1zM561 108h1v1h-1zM517 109h1v1h-1zM520 109h1v1h-1zM528 109h1v1h-1zM530 109h1v1h-1zM534 109h2v1h-2zM540 109h1v1h-1zM542 109h1v1h-1zM544 109h1v1h-1zM549 109h1v1h-1zM553 109h1v1h-1zM556 109h2v1h-2zM559 109h1v1h-1zM561 109h1v1h-1zM517 110h1v1h-1zM520 110h1v1h-1zM527 110h1v1h-1zM530 110h1v1h-1zM532 110h1v1h-1zM535 110h1v1h-1zM540 110h2v1h-2zM545 110h1v1h-1zM549 110h1v1h-1zM553 110h3v1h-3zM560 110h2v1h-2zM516 111h2v1h-2zM519 111h1v1h-1zM527 111h1v1h-1zM530 111h2v1h-2zM536 111h2v1h-2zM540 111h1v1h-1zM547 111h3v1h-3zM553 111h1v1h-1zM561 111h1v1h-1z"/><path fill="#000" d="M73 119h1v1h-1zM77 119h1v1h-1zM86 119h1v1h-1zM88 119h1v1h-1zM71 120h9v1h-9zM82 120h1v1h-1zM86 120h1v1h-1zM89 120h1v1h-1zM73 121h1v1h-1zM77 121h1v1h-1zM83 121h1v1h-1zM86 121h7v1h-7zM73 122h3v1h-3zM77 122h1v1h-1zM83 122h1v1h-1zM85 122h2v1h-2zM89 122h1v1h-1zM73 123h1v1h-1zM75 123h3v1h-3zM86 123h1v1h-1zM89 123h1v1h-1zM73 124h1v1h-1zM77 124h1v1h-1zM84 124h1v1h-1zM86 124h6v1h-6zM70 125h11v1h-11zM84 125h1v1h-1zM86 125h1v1h-1zM89 125h1v1h-1zM72 126h1v1h-1zM75 126h1v1h-1zM78 126h1v1h-1zM82 126h2v1h-2zM86 126h6v1h-6zM70 127h2v1h-2zM73 127h5v1h-5zM79 127h2v1h-2zM83 127h1v1h-1zM86 127h1v1h-1zM89 127h1v1h-1zM75 128h1v1h-1zM83 128h1v1h-1zM86 128h1v1h-1zM89 128h1v1h-1zM70 129h11v1h-11zM83 129h1v1h-1zM86 129h7v1h-7z"/><path fill="#000" d="M158 121h1v1h-1zM161 121h1v1h-1zM171 121h1v1h-1zM158 122h1v1h-1zM162 122h1v1h-1zM169 122h7v1h-7zM157 123h1v1h-1zM159 123h7v1h-7zM169 123h1v1h-1zM175 123h1v1h-1zM157 124h1v1h-1zM169 124h7v1h-7zM156 125h2v1h-2zM160 125h5v1h-5zM169 125h1v1h-1zM175 125h1v1h-1zM155 126h1v1h-1zM157 126h1v1h-1zM169 126h7v1h-7zM157 127h1v1h-1zM160 127h5v1h-5zM169 127h1v1h-1zM175 127h1v1h-1zM157 128h1v1h-1zM169 128h7v1h-7zM157 129h1v1h-1zM160 129h5v1h-5zM168 129h1v1h-1zM170 129h1v1h-1zM172 129h1v1h-1zM176 129h1v1h-1zM157 130h1v1h-1zM160 130h1v1h-1zM164 130h1v1h-1zM168 130h1v1h-1zM170 130h1v1h-1zM173 130h1v1h-1zM175 130h1v1h-1zM177 130h1v1h-1zM157 131h1v1h-1zM160 131h5v1h-5zM167 131h1v1h-1zM171 131h5v1h-5z"/><path fill="#000" d="M241 121h1v1h-1zM246 121h1v1h-1zM257 121h1v1h-1zM241 122h3v1h-3zM245 122h4v1h-4zM252 122h10v1h-10zM240 123h1v1h-1zM243 123h1v1h-1zM246 123h1v1h-1zM248 123h1v1h-1zM252 123h1v1h-1zM257 123h1v1h-1zM239 124h2v1h-2zM243 124h7v1h-7zM252 124h1v1h-1zM254 124h7v1h-7zM240 125h1v1h-1zM242 125h1v1h-1zM246 125h1v1h-1zM248 125h1v1h-1zM252 125h1v1h-1zM257 125h1v1h-1zM260 125h1v1h-1zM240 126h1v1h-1zM242 126h8v1h-8zM252 126h10v1h-10zM240 127h1v1h-1zM244 127h1v1h-1zM246 127h1v1h-1zM252 127h1v1h-1zM257 127h1v1h-1zM260 127h1v1h-1zM240 128h1v1h-1zM242 128h1v1h-1zM244 128h6v1h-6zM252 128h1v1h-1zM254 128h7v1h-7zM240 129h1v1h-1zM243 129h1v1h-1zM246 129h1v1h-1zM252 129h1v1h-1zM254 129h1v1h-1zM257 129h1v1h-1zM260 129h1v1h-1zM240 130h1v1h-1zM242 130h1v1h-1zM244 130h1v1h-1zM246 130h1v1h-1zM251 130h1v1h-1zM255 130h1v1h-1zM257 130h1v1h-1zM259 130h1v1h-1zM240 131h2v1h-2zM245 131h5v1h-5zM251 131h1v1h-1zM253 131h2v1h-2zM256 131h2v1h-2zM260 131h2v1h-2z"/><path fill="#000" d="M323 121h1v1h-1zM328 121h1v1h-1zM330 121h1v1h-1zM335 121h1v1h-1zM339 121h5v1h-5zM348 121h1v1h-1zM360 121h1v1h-1zM364 121h1v1h-1zM366 121h1v1h-1zM323 122h1v1h-1zM326 122h7v1h-7zM336 122h1v1h-1zM339 122h1v1h-1zM343 122h1v1h-1zM348 122h1v1h-1zM351 122h6v1h-6zM360 122h1v1h-1zM362 122h7v1h-7zM323 123h3v1h-3zM328 123h1v1h-1zM330 123h1v1h-1zM339 123h1v1h-1zM343 123h1v1h-1zM346 123h5v1h-5zM356 123h1v1h-1zM358 123h4v1h-4zM364 123h1v1h-1zM366 123h1v1h-1zM322 124h1v1h-1zM328 124h1v1h-1zM330 124h1v1h-1zM339 124h5v1h-5zM348 124h1v1h-1zM356 124h1v1h-1zM360 124h1v1h-1zM322 125h3v1h-3zM326 125h7v1h-7zM334 125h3v1h-3zM348 125h1v1h-1zM350 125h1v1h-1zM356 125h1v1h-1zM360 125h1v1h-1zM363 125h6v1h-6zM323 126h1v1h-1zM336 126h1v1h-1zM339 126h5v1h-5zM348 126h2v1h-2zM352 126h5v1h-5zM360 126h2v1h-2zM363 126h1v1h-1zM365 126h1v1h-1zM368 126h1v1h-1zM322 127h4v1h-4zM327 127h5v1h-5zM336 127h1v1h-1zM341 127h1v1h-1zM347 127h2v1h-2zM356 127h1v1h-1zM359 127h2v1h-2zM363 127h1v1h-1zM365 127h1v1h-1zM368 127h1v1h-1zM323 128h1v1h-1zM327 128h1v1h-1zM331 128h1v1h-1zM336 128h1v1h-1zM338 128h7v1h-7zM346 128h1v1h-1zM348 128h1v1h-1zM356 128h1v1h-1zM358 128h1v1h-1zM360 128h1v1h-1zM363 128h6v1h-6zM323 129h1v1h-1zM327 129h5v1h-5zM336 129h2v1h-2zM340 129h1v1h-1zM342 129h1v1h-1zM348 129h1v1h-1zM356 129h1v1h-1zM360 129h1v1h-1zM363 129h1v1h-1zM365 129h1v1h-1zM368 129h1v1h-1zM323 130h1v1h-1zM325 130h1v1h-1zM327 130h1v1h-1zM331 130h1v1h-1zM336 130h1v1h-1zM339 130h1v1h-1zM343 130h1v1h-1zM348 130h1v1h-1zM351 130h6v1h-6zM360 130h1v1h-1zM363 130h6v1h-6zM323 131h2v1h-2zM327 131h5v1h-5zM338 131h1v1h-1zM344 131h1v1h-1zM346 131h3v1h-3zM358 131h3v1h-3zM363 131h1v1h-1zM368 131h1v1h-1z"/><path fill="#000" d="M432 121h7v1h-7zM444 121h7v1h-7zM457 121h1v1h-1zM461 121h1v1h-1zM467 121h9v1h-9zM432 122h1v1h-1zM438 122h1v1h-1zM450 122h1v1h-1zM457 122h8v1h-8zM467 122h1v1h-1zM471 122h1v1h-1zM475 122h1v1h-1zM432 123h1v1h-1zM438 123h1v1h-1zM444 123h7v1h-7zM456 123h1v1h-1zM461 123h1v1h-1zM467 123h1v1h-1zM471 123h1v1h-1zM475 123h1v1h-1zM432 124h7v1h-7zM450 124h1v1h-1zM456 124h1v1h-1zM458 124h7v1h-7zM467 124h9v1h-9zM432 125h1v1h-1zM438 125h1v1h-1zM442 125h11v1h-11zM455 125h2v1h-2zM458 125h1v1h-1zM461 125h1v1h-1zM464 125h1v1h-1zM467 125h1v1h-1zM471 125h1v1h-1zM475 125h1v1h-1zM432 126h1v1h-1zM438 126h1v1h-1zM444 126h1v1h-1zM447 126h1v1h-1zM451 126h1v1h-1zM454 126h1v1h-1zM456 126h1v1h-1zM458 126h7v1h-7zM467 126h1v1h-1zM471 126h1v1h-1zM475 126h1v1h-1zM432 127h7v1h-7zM445 127h1v1h-1zM447 127h2v1h-2zM450 127h1v1h-1zM456 127h1v1h-1zM458 127h1v1h-1zM461 127h1v1h-1zM467 127h9v1h-9zM432 128h1v1h-1zM438 128h1v1h-1zM446 128h2v1h-2zM449 128h1v1h-1zM456 128h1v1h-1zM459 128h1v1h-1zM461 128h1v1h-1zM467 128h1v1h-1zM471 128h1v1h-1zM475 128h1v1h-1zM432 129h1v1h-1zM438 129h1v1h-1zM444 129h2v1h-2zM447 129h1v1h-1zM450 129h1v1h-1zM456 129h1v1h-1zM460 129h1v1h-1zM467 129h1v1h-1zM471 129h1v1h-1zM475 129h1v1h-1zM432 130h7v1h-7zM442 130h2v1h-2zM447 130h1v1h-1zM451 130h2v1h-2zM456 130h1v1h-1zM459 130h1v1h-1zM461 130h2v1h-2zM466 130h1v1h-1zM471 130h1v1h-1zM475 130h1v1h-1zM432 131h1v1h-1zM438 131h1v1h-1zM446 131h2v1h-2zM456 131h3v1h-3zM463 131h2v1h-2zM466 131h1v1h-1zM471 131h1v1h-1zM474 131h2v1h-2z"/><path fill="#000" d="M541 121h1v1h-1zM546 121h1v1h-1zM552 121h10v1h-10zM541 122h9v1h-9zM552 122h1v1h-1zM561 122h1v1h-1zM539 123h4v1h-4zM544 123h1v1h-1zM547 123h1v1h-1zM549 123h1v1h-1zM551 123h1v1h-1zM554 123h1v1h-1zM560 123h1v1h-1zM541 124h1v1h-1zM543 124h1v1h-1zM545 124h3v1h-3zM549 124h1v1h-1zM554 124h6v1h-6zM541 125h2v1h-2zM544 125h1v1h-1zM548 125h1v1h-1zM554 125h1v1h-1zM541 126h1v1h-1zM543 126h1v1h-1zM545 126h3v1h-3zM549 126h1v1h-1zM554 126h7v1h-7zM539 127h4v1h-4zM560 127h1v1h-1zM541 128h1v1h-1zM543 128h7v1h-7zM552 128h7v1h-7zM560 128h1v1h-1zM541 129h1v1h-1zM544 129h1v1h-1zM546 129h1v1h-1zM548 129h1v1h-1zM560 129h1v1h-1zM541 130h1v1h-1zM543 130h1v1h-1zM546 130h1v1h-1zM549 130h1v1h-1zM557 130h1v1h-1zM559 130h1v1h-1zM539 131h4v1h-4zM545 131h2v1h-2zM549 131h1v1h-1zM558 131h1v1h-1z"/><path fill="#000" d="M512 151h9v1h-9zM525 151h1v1h-1zM530 151h1v1h-1zM514 152h1v1h-1zM518 152h1v1h-1zM525 152h1v1h-1zM530 152h1v1h-1zM514 153h1v1h-1zM518 153h1v1h-1zM523 153h5v1h-5zM529 153h1v1h-1zM532 153h1v1h-1zM514 154h1v1h-1zM518 154h1v1h-1zM525 154h1v1h-1zM527 154h1v1h-1zM529 154h1v1h-1zM533 154h1v1h-1zM514 155h1v1h-1zM518 155h1v1h-1zM525 155h1v1h-1zM527 155h7v1h-7zM511 156h11v1h-11zM524 156h1v1h-1zM527 156h1v1h-1zM514 157h1v1h-1zM518 157h1v1h-1zM524 157h1v1h-1zM526 157h1v1h-1zM529 157h5v1h-5zM513 158h1v1h-1zM518 158h1v1h-1zM525 158h2v1h-2zM529 158h1v1h-1zM533 158h1v1h-1zM513 159h1v1h-1zM518 159h1v1h-1zM525 159h1v1h-1zM527 159h1v1h-1zM529 159h1v1h-1zM533 159h1v1h-1zM512 160h1v1h-1zM518 160h1v1h-1zM524 160h1v1h-1zM527 160h1v1h-1zM529 160h5v1h-5zM511 161h1v1h-1zM518 161h1v1h-1zM523 161h1v1h-1zM529 161h1v1h-1zM533 161h1v1h-1z"/><path fill="#000" d="M502 183h1v1h-1zM508 183h1v1h-1zM513 183h6v1h-6zM503 184h1v1h-1zM506 184h5v1h-5zM514 184h1v1h-1zM517 184h1v1h-1zM519 184h5v1h-5zM508 185h1v1h-1zM514 185h1v1h-1zM517 185h1v1h-1zM519 185h1v1h-1zM523 185h1v1h-1zM501 186h3v1h-3zM505 186h7v1h-7zM514 186h4v1h-4zM519 186h1v1h-1zM523 186h1v1h-1zM503 187h1v1h-1zM507 187h1v1h-1zM509 187h1v1h-1zM511 187h1v1h-1zM514 187h1v1h-1zM517 187h1v1h-1zM520 187h1v1h-1zM522 187h1v1h-1zM503 188h1v1h-1zM506 188h1v1h-1zM508 188h2v1h-2zM514 188h4v1h-4zM520 188h1v1h-1zM522 188h1v1h-1zM503 189h1v1h-1zM507 189h1v1h-1zM509 189h1v1h-1zM514 189h1v1h-1zM517 189h1v1h-1zM521 189h1v1h-1zM503 190h1v1h-1zM505 190h7v1h-7zM514 190h1v1h-1zM517 190h2v1h-2zM521 190h1v1h-1zM503 191h2v1h-2zM508 191h2v1h-2zM513 191h5v1h-5zM520 191h1v1h-1zM522 191h1v1h-1zM503 192h1v1h-1zM507 192h1v1h-1zM510 192h1v1h-1zM517 192h1v1h-1zM519 192h1v1h-1zM522 192h1v1h-1zM505 193h2v1h-2zM511 193h1v1h-1zM517 193h2v1h-2zM523 193h1v1h-1z"/><path fill="#000" d="M502 198h10v1h-10zM516 198h2v1h-2zM502 199h1v1h-1zM511 199h1v1h-1zM518 199h1v1h-1zM501 200h1v1h-1zM504 200h1v1h-1zM510 200h1v1h-1zM518 200h1v1h-1zM504 201h6v1h-6zM518 201h1v1h-1zM504 202h1v1h-1zM517 202h1v1h-1zM519 202h1v1h-1zM504 203h7v1h-7zM517 203h1v1h-1zM519 203h1v1h-1zM510 204h1v1h-1zM516 204h1v1h-1zM520 204h1v1h-1zM502 205h7v1h-7zM510 205h1v1h-1zM516 205h1v1h-1zM520 205h1v1h-1zM510 206h1v1h-1zM515 206h1v1h-1zM521 206h1v1h-1zM507 207h1v1h-1zM509 207h1v1h-1zM514 207h1v1h-1zM522 207h1v1h-1zM508 208h1v1h-1zM513 208h1v1h-1zM523 208h1v1h-1z"/><path fill="#000" d="M502 220h1v1h-1zM505 220h7v1h-7zM516 220h1v1h-1zM518 220h5v1h-5zM502 221h1v1h-1zM513 221h3v1h-3zM518 221h1v1h-1zM522 221h1v1h-1zM502 222h3v1h-3zM506 222h5v1h-5zM515 222h1v1h-1zM518 222h1v1h-1zM522 222h1v1h-1zM501 223h1v1h-1zM503 223h1v1h-1zM506 223h1v1h-1zM510 223h1v1h-1zM513 223h4v1h-4zM518 223h5v1h-5zM503 224h1v1h-1zM506 224h1v1h-1zM510 224h1v1h-1zM515 224h1v1h-1zM501 225h4v1h-4zM506 225h5v1h-5zM515 225h2v1h-2zM518 225h5v1h-5zM503 226h1v1h-1zM514 226h2v1h-2zM517 226h1v1h-1zM520 226h1v1h-1zM503 227h1v1h-1zM506 227h1v1h-1zM510 227h1v1h-1zM514 227h2v1h-2zM518 227h5v1h-5zM502 228h1v1h-1zM504 228h1v1h-1zM507 228h1v1h-1zM509 228h1v1h-1zM513 228h1v1h-1zM515 228h1v1h-1zM520 228h1v1h-1zM502 229h1v1h-1zM509 229h1v1h-1zM515 229h1v1h-1zM520 229h1v1h-1zM501 230h1v1h-1zM505 230h7v1h-7zM515 230h1v1h-1zM517 230h7v1h-7z"/><path fill="#000" d="M504 265h1v1h-1zM508 265h1v1h-1zM514 265h1v1h-1zM520 265h1v1h-1zM526 265h1v1h-1zM532 265h1v1h-1zM542 265h1v1h-1zM504 266h1v1h-1zM508 266h1v1h-1zM514 266h1v1h-1zM519 266h1v1h-1zM521 266h1v1h-1zM527 266h9v1h-9zM537 266h11v1h-11zM503 267h1v1h-1zM506 267h6v1h-6zM513 267h4v1h-4zM518 267h1v1h-1zM522 267h1v1h-1zM527 267h1v1h-1zM532 267h1v1h-1zM537 267h1v1h-1zM541 267h1v1h-1zM546 267h1v1h-1zM503 268h1v1h-1zM508 268h1v1h-1zM514 268h1v1h-1zM517 268h1v1h-1zM519 268h3v1h-3zM523 268h1v1h-1zM529 268h7v1h-7zM538 268h1v1h-1zM540 268h1v1h-1zM543 268h1v1h-1zM545 268h1v1h-1zM502 269h2v1h-2zM505 269h7v1h-7zM513 269h1v1h-1zM515 269h1v1h-1zM525 269h3v1h-3zM529 269h1v1h-1zM532 269h1v1h-1zM535 269h1v1h-1zM541 269h2v1h-2zM501 270h1v1h-1zM503 270h1v1h-1zM507 270h1v1h-1zM513 270h7v1h-7zM523 270h1v1h-1zM527 270h1v1h-1zM529 270h7v1h-7zM539 270h1v1h-1zM541 270h1v1h-1zM543 270h1v1h-1zM545 270h1v1h-1zM503 271h1v1h-1zM506 271h6v1h-6zM515 271h1v1h-1zM517 271h1v1h-1zM519 271h1v1h-1zM521 271h1v1h-1zM523 271h1v1h-1zM527 271h1v1h-1zM531 271h3v1h-3zM537 271h2v1h-2zM540 271h5v1h-5zM546 271h1v1h-1zM503 272h1v1h-1zM510 272h1v1h-1zM515 272h5v1h-5zM521 272h1v1h-1zM523 272h1v1h-1zM527 272h1v1h-1zM530 272h1v1h-1zM532 272h1v1h-1zM534 272h1v1h-1zM542 272h1v1h-1zM503 273h1v1h-1zM507 273h1v1h-1zM509 273h1v1h-1zM513 273h3v1h-3zM517 273h1v1h-1zM519 273h1v1h-1zM521 273h1v1h-1zM523 273h1v1h-1zM527 273h1v1h-1zM529 273h1v1h-1zM532 273h1v1h-1zM535 273h1v1h-1zM537 273h11v1h-11zM503 274h1v1h-1zM508 274h1v1h-1zM515 274h1v1h-1zM517 274h3v1h-3zM521 274h1v1h-1zM523 274h1v1h-1zM526 274h1v1h-1zM528 274h1v1h-1zM532 274h1v1h-1zM542 274h1v1h-1zM503 275h1v1h-1zM509 275h1v1h-1zM515 275h1v1h-1zM517 275h1v1h-1zM519 275h1v1h-1zM522 275h2v1h-2zM525 275h1v1h-1zM529 275h7v1h-7zM542 275h1v1h-1z"/><path fill="#000" d="M485 282h7v1h-7zM498 282h1v1h-1zM503 282h2v1h-2zM485 283h1v1h-1zM491 283h1v1h-1zM498 283h5v1h-5zM485 284h7v1h-7zM497 284h1v1h-1zM499 284h1v1h-1zM502 284h1v1h-1zM485 285h1v1h-1zM491 285h1v1h-1zM497 285h1v1h-1zM499 285h1v1h-1zM502 285h1v1h-1zM483 286h11v1h-11zM496 286h2v1h-2zM499 286h1v1h-1zM502 286h1v1h-1zM484 287h1v1h-1zM487 287h1v1h-1zM495 287h1v1h-1zM497 287h1v1h-1zM499 287h7v1h-7zM484 288h9v1h-9zM497 288h1v1h-1zM499 288h1v1h-1zM502 288h1v1h-1zM484 289h1v1h-1zM487 289h1v1h-1zM489 289h1v1h-1zM492 289h1v1h-1zM497 289h1v1h-1zM499 289h1v1h-1zM502 289h1v1h-1zM505 289h1v1h-1zM484 290h4v1h-4zM490 290h2v1h-2zM497 290h1v1h-1zM499 290h1v1h-1zM501 290h1v1h-1zM503 290h1v1h-1zM505 290h1v1h-1zM483 291h2v1h-2zM487 291h1v1h-1zM490 291h2v1h-2zM497 291h1v1h-1zM499 291h2v1h-2zM502 291h1v1h-1zM504 291h2v1h-2zM487 292h3v1h-3zM492 292h2v1h-2zM497 292h1v1h-1zM499 292h1v1h-1zM503 292h1v1h-1zM505 292h1v1h-1z"/><path fill="#000" d="M485 312h7v1h-7zM500 312h1v1h-1zM485 313h1v1h-1zM491 313h1v1h-1zM495 313h11v1h-11zM485 314h7v1h-7zM485 315h1v1h-1zM491 315h1v1h-1zM498 315h5v1h-5zM483 316h11v1h-11zM498 316h1v1h-1zM502 316h1v1h-1zM484 317h1v1h-1zM487 317h1v1h-1zM496 317h9v1h-9zM484 318h9v1h-9zM496 318h1v1h-1zM504 318h1v1h-1zM484 319h1v1h-1zM487 319h1v1h-1zM489 319h1v1h-1zM492 319h1v1h-1zM496 319h1v1h-1zM498 319h5v1h-5zM504 319h1v1h-1zM484 320h4v1h-4zM490 320h2v1h-2zM496 320h1v1h-1zM498 320h1v1h-1zM502 320h1v1h-1zM504 320h1v1h-1zM483 321h2v1h-2zM487 321h1v1h-1zM490 321h2v1h-2zM496 321h1v1h-1zM498 321h5v1h-5zM504 321h1v1h-1zM487 322h3v1h-3zM492 322h2v1h-2zM496 322h1v1h-1zM503 322h2v1h-2z"/><path fill="#000" d="M484 342h9v1h-9zM497 342h1v1h-1zM501 342h1v1h-1zM488 343h1v1h-1zM497 343h1v1h-1zM501 343h1v1h-1zM485 344h1v1h-1zM488 344h1v1h-1zM491 344h1v1h-1zM497 344h1v1h-1zM500 344h6v1h-6zM486 345h1v1h-1zM488 345h1v1h-1zM490 345h1v1h-1zM495 345h4v1h-4zM505 345h1v1h-1zM488 346h1v1h-1zM497 346h1v1h-1zM500 346h1v1h-1zM505 346h1v1h-1zM483 347h11v1h-11zM497 347h1v1h-1zM501 347h1v1h-1zM505 347h1v1h-1zM488 348h1v1h-1zM497 348h1v1h-1zM499 348h1v1h-1zM503 348h1v1h-1zM505 348h1v1h-1zM488 349h1v1h-1zM497 349h2v1h-2zM502 349h1v1h-1zM505 349h1v1h-1zM488 350h1v1h-1zM495 350h2v1h-2zM500 350h2v1h-2zM505 350h1v1h-1zM488 351h1v1h-1zM505 351h1v1h-1zM488 352h1v1h-1zM503 352h2v1h-2z"/><path fill="#000" d="M505 382h1v1h-1zM513 382h6v1h-6zM533 382h1v1h-1zM539 382h1v1h-1zM542 382h6v1h-6zM501 383h11v1h-11zM514 383h1v1h-1zM517 383h1v1h-1zM519 383h5v1h-5zM525 383h4v1h-4zM533 383h1v1h-1zM540 383h1v1h-1zM547 383h1v1h-1zM504 384h1v1h-1zM514 384h1v1h-1zM517 384h1v1h-1zM519 384h1v1h-1zM523 384h1v1h-1zM525 384h1v1h-1zM528 384h8v1h-8zM538 384h1v1h-1zM547 384h1v1h-1zM503 385h1v1h-1zM505 385h6v1h-6zM514 385h4v1h-4zM519 385h1v1h-1zM523 385h1v1h-1zM525 385h1v1h-1zM528 385h1v1h-1zM533 385h1v1h-1zM538 385h1v1h-1zM541 385h4v1h-4zM547 385h1v1h-1zM503 386h1v1h-1zM509 386h1v1h-1zM514 386h1v1h-1zM517 386h1v1h-1zM520 386h1v1h-1zM522 386h1v1h-1zM525 386h1v1h-1zM528 386h1v1h-1zM530 386h1v1h-1zM533 386h1v1h-1zM538 386h1v1h-1zM541 386h1v1h-1zM544 386h1v1h-1zM547 386h1v1h-1zM502 387h2v1h-2zM508 387h1v1h-1zM514 387h4v1h-4zM520 387h1v1h-1zM522 387h1v1h-1zM525 387h4v1h-4zM531 387h1v1h-1zM533 387h1v1h-1zM538 387h1v1h-1zM541 387h4v1h-4zM547 387h1v1h-1zM501 388h1v1h-1zM503 388h9v1h-9zM514 388h1v1h-1zM517 388h1v1h-1zM521 388h1v1h-1zM525 388h1v1h-1zM528 388h1v1h-1zM531 388h1v1h-1zM533 388h1v1h-1zM538 388h1v1h-1zM541 388h1v1h-1zM544 388h1v1h-1zM547 388h1v1h-1zM503 389h1v1h-1zM508 389h1v1h-1zM514 389h1v1h-1zM517 389h2v1h-2zM521 389h1v1h-1zM525 389h1v1h-1zM528 389h1v1h-1zM533 389h1v1h-1zM538 389h1v1h-1zM541 389h1v1h-1zM544 389h1v1h-1zM547 389h1v1h-1zM503 390h1v1h-1zM508 390h1v1h-1zM513 390h5v1h-5zM520 390h1v1h-1zM522 390h1v1h-1zM525 390h1v1h-1zM528 390h1v1h-1zM533 390h1v1h-1zM538 390h1v1h-1zM541 390h4v1h-4zM547 390h1v1h-1zM503 391h1v1h-1zM508 391h1v1h-1zM517 391h1v1h-1zM519 391h1v1h-1zM522 391h1v1h-1zM525 391h4v1h-4zM533 391h1v1h-1zM538 391h1v1h-1zM547 391h1v1h-1zM503 392h1v1h-1zM506 392h3v1h-3zM517 392h2v1h-2zM523 392h1v1h-1zM531 392h3v1h-3zM538 392h1v1h-1zM545 392h3v1h-3z"/><path fill="#000" d="M506 412h1v1h-1zM515 412h1v1h-1zM518 412h1v1h-1zM521 412h1v1h-1zM528 412h1v1h-1zM532 412h1v1h-1zM538 412h1v1h-1zM544 412h1v1h-1zM550 412h1v1h-1zM556 412h1v1h-1zM566 412h1v1h-1zM502 413h10v1h-10zM515 413h1v1h-1zM518 413h1v1h-1zM522 413h1v1h-1zM528 413h1v1h-1zM532 413h1v1h-1zM538 413h1v1h-1zM543 413h1v1h-1zM545 413h1v1h-1zM551 413h9v1h-9zM561 413h11v1h-11zM502 414h1v1h-1zM505 414h1v1h-1zM508 414h1v1h-1zM511 414h1v1h-1zM514 414h1v1h-1zM518 414h1v1h-1zM527 414h1v1h-1zM530 414h6v1h-6zM537 414h4v1h-4zM542 414h1v1h-1zM546 414h1v1h-1zM551 414h1v1h-1zM556 414h1v1h-1zM561 414h1v1h-1zM565 414h1v1h-1zM570 414h1v1h-1zM501 415h1v1h-1zM504 415h1v1h-1zM509 415h1v1h-1zM514 415h10v1h-10zM527 415h1v1h-1zM532 415h1v1h-1zM538 415h1v1h-1zM541 415h1v1h-1zM543 415h3v1h-3zM547 415h1v1h-1zM553 415h7v1h-7zM562 415h1v1h-1zM564 415h1v1h-1zM567 415h1v1h-1zM569 415h1v1h-1zM503 416h1v1h-1zM506 416h1v1h-1zM508 416h1v1h-1zM510 416h1v1h-1zM517 416h1v1h-1zM526 416h2v1h-2zM529 416h7v1h-7zM537 416h1v1h-1zM539 416h1v1h-1zM549 416h3v1h-3zM553 416h1v1h-1zM556 416h1v1h-1zM559 416h1v1h-1zM565 416h2v1h-2zM506 417h1v1h-1zM509 417h1v1h-1zM517 417h5v1h-5zM525 417h1v1h-1zM527 417h1v1h-1zM531 417h1v1h-1zM537 417h7v1h-7zM547 417h1v1h-1zM551 417h1v1h-1zM553 417h7v1h-7zM563 417h1v1h-1zM565 417h1v1h-1zM567 417h1v1h-1zM569 417h1v1h-1zM502 418h10v1h-10zM517 418h1v1h-1zM521 418h1v1h-1zM527 418h1v1h-1zM530 418h6v1h-6zM539 418h1v1h-1zM541 418h1v1h-1zM543 418h1v1h-1zM545 418h1v1h-1zM547 418h1v1h-1zM551 418h1v1h-1zM555 418h3v1h-3zM561 418h2v1h-2zM564 418h5v1h-5zM570 418h1v1h-1zM506 419h1v1h-1zM516 419h1v1h-1zM518 419h1v1h-1zM520 419h1v1h-1zM527 419h1v1h-1zM534 419h1v1h-1zM539 419h5v1h-5zM545 419h1v1h-1zM547 419h1v1h-1zM551 419h1v1h-1zM554 419h1v1h-1zM556 419h1v1h-1zM558 419h1v1h-1zM566 419h1v1h-1zM505 420h1v1h-1zM507 420h1v1h-1zM515 420h1v1h-1zM519 420h1v1h-1zM527 420h1v1h-1zM531 420h1v1h-1zM533 420h1v1h-1zM537 420h3v1h-3zM541 420h1v1h-1zM543 420h1v1h-1zM545 420h1v1h-1zM547 420h1v1h-1zM551 420h1v1h-1zM553 420h1v1h-1zM556 420h1v1h-1zM559 420h1v1h-1zM561 420h11v1h-11zM503 421h2v1h-2zM508 421h2v1h-2zM514 421h1v1h-1zM518 421h1v1h-1zM520 421h2v1h-2zM527 421h1v1h-1zM532 421h1v1h-1zM539 421h1v1h-1zM541 421h3v1h-3zM545 421h1v1h-1zM547 421h1v1h-1zM550 421h1v1h-1zM552 421h1v1h-1zM556 421h1v1h-1zM566 421h1v1h-1zM501 422h2v1h-2zM510 422h2v1h-2zM513 422h1v1h-1zM516 422h2v1h-2zM522 422h2v1h-2zM527 422h1v1h-1zM533 422h1v1h-1zM539 422h1v1h-1zM541 422h1v1h-1zM543 422h1v1h-1zM546 422h2v1h-2zM549 422h1v1h-1zM553 422h7v1h-7zM566 422h1v1h-1z"/><path fill="#000" d="M511 443h1v1h-1zM520 443h9v1h-9zM536 443h1v1h-1zM511 444h1v1h-1zM520 444h1v1h-1zM524 444h1v1h-1zM528 444h1v1h-1zM531 444h11v1h-11zM511 445h6v1h-6zM520 445h1v1h-1zM524 445h1v1h-1zM528 445h1v1h-1zM531 445h1v1h-1zM535 445h1v1h-1zM540 445h1v1h-1zM511 446h1v1h-1zM520 446h9v1h-9zM532 446h1v1h-1zM534 446h1v1h-1zM537 446h1v1h-1zM539 446h1v1h-1zM511 447h1v1h-1zM520 447h1v1h-1zM524 447h1v1h-1zM528 447h1v1h-1zM535 447h2v1h-2zM508 448h8v1h-8zM520 448h1v1h-1zM524 448h1v1h-1zM528 448h1v1h-1zM533 448h1v1h-1zM535 448h1v1h-1zM537 448h1v1h-1zM539 448h1v1h-1zM508 449h1v1h-1zM515 449h1v1h-1zM520 449h9v1h-9zM531 449h2v1h-2zM534 449h5v1h-5zM540 449h1v1h-1zM508 450h1v1h-1zM515 450h1v1h-1zM520 450h1v1h-1zM524 450h1v1h-1zM528 450h1v1h-1zM536 450h1v1h-1zM508 451h1v1h-1zM515 451h1v1h-1zM520 451h1v1h-1zM524 451h1v1h-1zM528 451h1v1h-1zM531 451h11v1h-11zM508 452h8v1h-8zM519 452h1v1h-1zM524 452h1v1h-1zM528 452h1v1h-1zM536 452h1v1h-1zM508 453h1v1h-1zM515 453h1v1h-1zM519 453h1v1h-1zM524 453h1v1h-1zM527 453h2v1h-2zM536 453h1v1h-1z"/><rect x="47" y="42" width="6" height="1" fill="#000"/><rect x="98" y="42" width="6" height="1" fill="#000"/></svg>
</body></html>
